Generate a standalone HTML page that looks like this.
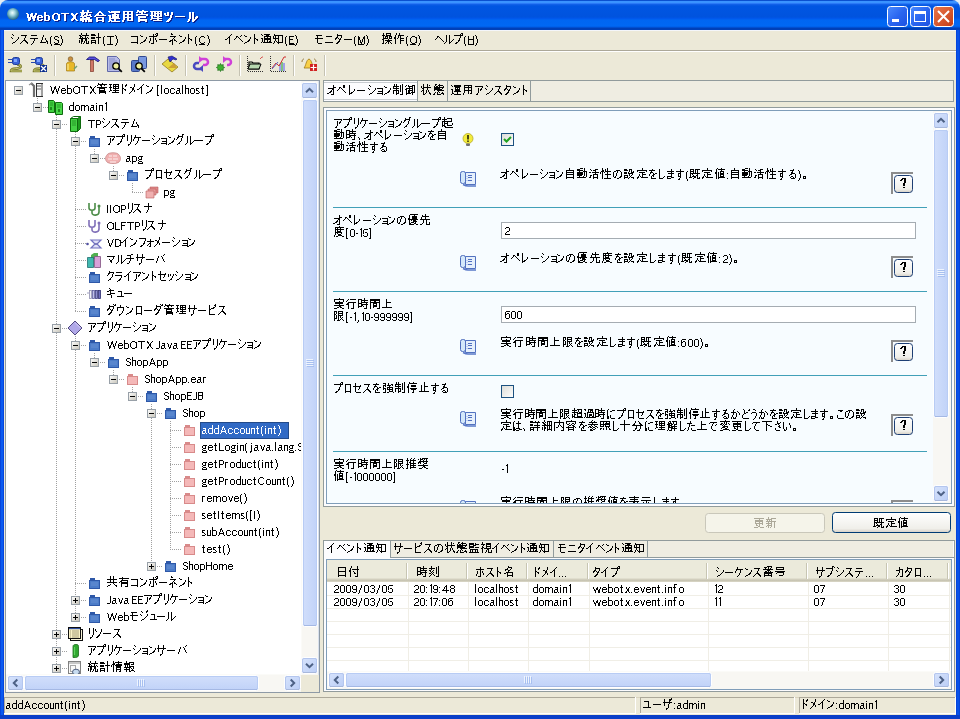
<!DOCTYPE html>
<html><head><meta charset="utf-8"><style>
html,body{margin:0;padding:0;width:960px;height:719px;overflow:hidden;background:#0A3FD6}
svg{display:block}
</style></head><body>
<svg width="960" height="719" viewBox="0 0 960 719">
<defs>
<linearGradient id="gTitle" x1="0" y1="0" x2="0" y2="30" gradientUnits="userSpaceOnUse"><stop offset="0.0000" stop-color="#0A50D0"/><stop offset="0.0267" stop-color="#0A50D0"/><stop offset="0.0400" stop-color="#3A93FF"/><stop offset="0.0933" stop-color="#3A93FF"/><stop offset="0.1167" stop-color="#2A7AF8"/><stop offset="0.1500" stop-color="#1060E8"/><stop offset="0.2000" stop-color="#0056E2"/><stop offset="0.5667" stop-color="#0053DE"/><stop offset="0.6167" stop-color="#0058EC"/><stop offset="0.6667" stop-color="#0066F2"/><stop offset="0.8667" stop-color="#0068F4"/><stop offset="0.9067" stop-color="#0058E0"/><stop offset="0.9333" stop-color="#0040B8"/><stop offset="0.9867" stop-color="#0040B8"/><stop offset="1.0000" stop-color="#0040B8"/></linearGradient>
<radialGradient id="gGlobe" cx="0.45" cy="0.4" r="0.6"><stop offset="0" stop-color="#F0FFFF"/><stop offset="0.35" stop-color="#A8D8E0"/><stop offset="0.75" stop-color="#4890A8"/><stop offset="1" stop-color="#2A6080"/></radialGradient>
<linearGradient id="gTBtn" x1="0" y1="0" x2="1" y2="1"><stop offset="0" stop-color="#4C8CFF"/><stop offset="0.5" stop-color="#2A66F0"/><stop offset="1" stop-color="#1C50E0"/></linearGradient>
<linearGradient id="gClose" x1="0" y1="0" x2="1" y2="1"><stop offset="0" stop-color="#E8784C"/><stop offset="0.5" stop-color="#D85A30"/><stop offset="1" stop-color="#C03C18"/></linearGradient>
<clipPath id="clipContent"><rect x="327" y="111" width="606" height="392"/></clipPath>
<linearGradient id="gBtnV" x1="0" y1="0" x2="1" y2="1"><stop offset="0" stop-color="#D8E4FC"/><stop offset="1" stop-color="#BACDF6"/></linearGradient>
<linearGradient id="gThumbV" x1="0" y1="0" x2="1" y2="0"><stop offset="0" stop-color="#D2DFFB"/><stop offset="1" stop-color="#C0D2F8"/></linearGradient>
<linearGradient id="gThumbH" x1="0" y1="0" x2="0" y2="1"><stop offset="0" stop-color="#D2DFFB"/><stop offset="1" stop-color="#C0D2F8"/></linearGradient>
<linearGradient id="gBtn" x1="0" y1="0" x2="0" y2="1"><stop offset="0" stop-color="#FFFFFF"/><stop offset="0.8" stop-color="#F0EFEA"/><stop offset="1" stop-color="#D6D0C5"/></linearGradient>
<linearGradient id="gChk" x1="0" y1="0" x2="1" y2="1"><stop offset="0" stop-color="#DCDCD7"/><stop offset="1" stop-color="#FFFFFF"/></linearGradient>
<linearGradient id="gHdr" x1="0" y1="0" x2="0" y2="1"><stop offset="0" stop-color="#EBEADB"/><stop offset="0.82" stop-color="#EBEADB"/><stop offset="0.86" stop-color="#D6D3C2"/><stop offset="0.95" stop-color="#C5C2B0"/><stop offset="1" stop-color="#E2DFD0"/></linearGradient>
<clipPath id="clipTree"><rect x="6" y="81" width="295" height="594"/></clipPath>
<linearGradient id="gExp" x1="0" y1="0" x2="1" y2="1"><stop offset="0" stop-color="#FFFFFF"/><stop offset="1" stop-color="#C6C3B8"/></linearGradient>

<symbol id="i_folder" viewBox="0 0 16 16" width="16" height="16" overflow="visible">
<path d="M3 5h11v9H3z" fill="#2E58A8"/><path d="M4 3h5v2H4z" fill="#2E58A8"/><path d="M4 6h9v7H4z" fill="#4C7CC8"/><path d="M5 8h7M5 10h7" stroke="#7AA0DC" stroke-width="0.6"/>
</symbol>
<symbol id="i_pfolder" viewBox="0 0 16 16" width="16" height="16" overflow="visible">
<path d="M3 5h11v9H3z" fill="#D88A8A"/><path d="M4 3h5v2H4z" fill="#D88A8A"/><path d="M4 6h9v7H4z" fill="#F4B8B8"/>
</symbol>
<symbol id="i_root" viewBox="0 0 16 16" width="16" height="16" overflow="visible">
<path d="M2 1l3 3v11" stroke="#707070" stroke-width="2.2" fill="none"/><path d="M0 3l3-2" stroke="#909090" stroke-width="1.2"/>
<rect x="7.5" y="1.5" width="6" height="13" fill="#F4F4F4" stroke="#303030"/><path d="M8 4h5M8 7h5" stroke="#606060"/><rect x="12" y="2" width="2" height="12" fill="#A0A0A0"/>
</symbol>
<symbol id="i_domain" viewBox="0 0 16 16" width="16" height="16" overflow="visible">
<path d="M0.5 1.5h5l1 1v11h-6z" fill="#40D040" stroke="#0E6A0E"/><path d="M7.5 3.5h6l1 1v11h-7z" fill="#48D848" stroke="#0E6A0E"/>
<path d="M2 4h3M2 6h3M9 6h4M9 8h4" stroke="#1E8A1E" stroke-width="0.8"/><rect x="2" y="8" width="2" height="3" fill="#1E8A1E"/><rect x="10" y="10" width="2" height="3" fill="#1E8A1E"/>
</symbol>
<symbol id="i_tp" viewBox="0 0 16 16" width="16" height="16" overflow="visible">
<path d="M3.5 2.5h7v13h-7z" fill="#44D044" stroke="#0E6A0E"/><path d="M10.5 2.5l3-2v12l-3 3z" fill="#1E9A1E" stroke="#0E6A0E"/><path d="M3.5 2.5l3-2h7" fill="none" stroke="#0E6A0E"/>
<path d="M5 5h4M5 7h4M5 9h4" stroke="#1E8A1E" stroke-width="0.8"/>
</symbol>
<symbol id="i_apg" viewBox="0 0 16 16" width="16" height="16" overflow="visible">
<path d="M2 5c1-3 11-3 12 0c2 2 2 5 0 7c-2 2-10 2-12 0c-2-2-2-5 0-7z" fill="#F0B0B0" stroke="#C88888" stroke-width="0.8"/>
<path d="M4 6h3M8 6h4M3 9h4M8 9h5M5 12h6" stroke="#FFFFFF" stroke-width="0.8"/>
</symbol>
<symbol id="i_pg" viewBox="0 0 16 16" width="16" height="16" overflow="visible">
<path d="M7 3h8v6H7z" fill="#E08888" stroke="#B86060" stroke-width="0.6"/><path d="M5 5h8v6H5z" fill="#E89A9A" stroke="#B86060" stroke-width="0.6"/><path d="M3 7h8v7H3z" fill="#F0B0B0" stroke="#B86060" stroke-width="0.6"/>
</symbol>
<symbol id="i_iiop" viewBox="0 0 16 16" width="16" height="16" overflow="visible">
<path d="M3 2v5c0 3 6 3 6 0V2M6 10v2c0 3 7 3 7-1V6" stroke="#4C8C48" stroke-width="1.6" fill="none"/><circle cx="13" cy="5" r="1.5" fill="#4C8C48"/>
</symbol>
<symbol id="i_olftp" viewBox="0 0 16 16" width="16" height="16" overflow="visible">
<path d="M3 2v5c0 3 6 3 6 0V2M6 10v2c0 3 7 3 7-1V6" stroke="#8070B8" stroke-width="1.6" fill="none"/><circle cx="13" cy="5" r="1.5" fill="#8070B8"/>
</symbol>
<symbol id="i_vd" viewBox="0 0 16 16" width="16" height="16" overflow="visible">
<path d="M5 5h10l-4 4 4 4H5l4-4z" fill="#E0E0F8" stroke="#7070C0" stroke-width="1.2"/><circle cx="1.5" cy="9" r="1.3" fill="#5050A0"/><path d="M9 9h2" stroke="#404090"/>
</symbol>
<symbol id="i_multi" viewBox="0 0 16 16" width="16" height="16" overflow="visible">
<path d="M5 3l3-2h4v6H5z" fill="#50B050"/><path d="M1.5 5.5h6v10h-6z" fill="#40B8B0" stroke="#207070" stroke-width="0.8"/><path d="M8.5 4.5h6v11h-6z" fill="#D8A0D8" stroke="#805080" stroke-width="0.8"/>
</symbol>
<symbol id="i_queue" viewBox="0 0 16 16" width="16" height="16" overflow="visible">
<path d="M1 7h2" stroke="#A0A0C0"/><rect x="3.5" y="4.5" width="2" height="8" fill="#F0F0F8" stroke="#9090B0" stroke-width="0.8"/>
<rect x="6.5" y="4.5" width="2" height="8" fill="#C0C0E8" stroke="#6060A0" stroke-width="0.8"/><rect x="9.5" y="4.5" width="2" height="8" fill="#9090D0" stroke="#404080" stroke-width="0.8"/><rect x="12.5" y="4.5" width="2" height="8" fill="#7070C0" stroke="#303070" stroke-width="0.8"/>
</symbol>
<symbol id="i_diamond" viewBox="0 0 16 16" width="16" height="16" overflow="visible">
<path d="M8 1l7 7-7 7-7-7z" fill="#B0A8E8" stroke="#504880" stroke-width="1"/><path d="M8 2.5l5.5 5.5" stroke="#D8D0F8" stroke-width="1"/>
</symbol>
<symbol id="i_notepad" viewBox="0 0 16 16" width="16" height="16" overflow="visible">
<rect x="3.5" y="3.5" width="12" height="11" fill="#F8F4D8" stroke="#101010" stroke-width="1"/>
<rect x="1.5" y="1.5" width="12" height="11" fill="#FBF3C8" stroke="#101010" stroke-width="1"/>
<rect x="2" y="2" width="11" height="1.2" fill="#3050A0"/>
<path d="M3 5h1M5 5h7M3 7h1M5 7h7M3 9h1M5 9h7M3 11h1M5 11h7" stroke="#9A9470" stroke-width="0.9"/>
</symbol>
<symbol id="i_appsrv" viewBox="0 0 16 16" width="16" height="16" overflow="visible">
<path d="M6 3.5c0-1.5 1-2 3-2c2 0 2.5.5 2.5 2v8.5c0 1.5-1 2.5-3 2.5h-2.5z" fill="#30A830" stroke="#1A6A1A" stroke-width="0.8"/><path d="M7.5 4v8" stroke="#60D060" stroke-width="1.2"/>
</symbol>
<symbol id="i_stats" viewBox="0 0 16 16" width="16" height="16" overflow="visible">
<rect x="1.5" y="1.5" width="12" height="12" fill="#FAFAFA" stroke="#808080"/><rect x="2" y="2" width="11" height="2" fill="#C8C8C8"/><rect x="3.5" y="5.5" width="5" height="6" fill="none" stroke="#A8A8A8"/>
<ellipse cx="9" cy="12" rx="3.5" ry="2.8" fill="#C8DCF0" stroke="#506080" stroke-width="1"/><path d="M11.5 14l2 2" stroke="#202020" stroke-width="1.4"/>
</symbol>

<symbol id="i_book" viewBox="0 0 17 16" width="17" height="16" overflow="visible">
<rect x="0.5" y="0.5" width="5" height="12" rx="2" fill="#D4E8FA" stroke="#4C6CBC" stroke-width="1"/>
<path d="M5.5 1.5h10v12h-10z" fill="#E6F0FC" stroke="#5272C0" stroke-width="1"/>
<path d="M3 13.5c2 1 3 1.5 5 1.5h8" fill="none" stroke="#5878C8" stroke-width="1.5"/>
<path d="M8 4.5h4M8 6.5h4M8 9.5h4" stroke="#5070C0" stroke-width="1"/><path d="M7 5v6" stroke="#90A8E0" stroke-width="0.8" stroke-dasharray="1 1"/>
</symbol>
<symbol id="i_bulb" viewBox="0 0 14 16" width="14" height="16" overflow="visible">
<circle cx="8" cy="6.5" r="5" fill="#F2EC3C" stroke="#B8A828" stroke-width="0.8"/><rect x="6" y="11.5" width="4" height="2.5" rx="1" fill="#707070"/><rect x="7.3" y="3" width="1.4" height="4.5" fill="#000"/><rect x="7.3" y="8.5" width="1.4" height="1.4" fill="#000"/>
</symbol>

<symbol id="t_plug" viewBox="0 0 16 16" width="16" height="16" overflow="visible">
<path d="M9 8.5c5 0 5 3.5 0 4c-4 0.5-6 0.5-6 2.5h11" fill="none" stroke="#7C7C30" stroke-width="2.6"/>
<path d="M9 8.5c5 0 5 3.5 0 4c-4 0.5-6 0.5-6 2.5h11" fill="none" stroke="#C8C870" stroke-width="1"/>
<rect x="4.5" y="1.5" width="7" height="7" rx="2" fill="#3A62D8" stroke="#1C3A98" stroke-width="1"/><rect x="6" y="3" width="3" height="3" fill="#7CA4FF"/>
<path d="M0 3.5h4.5M0 6.5h4.5" stroke="#2848B0" stroke-width="1.2"/>
</symbol>
<symbol id="t_plugx" viewBox="0 0 16 16" width="16" height="16" overflow="visible">
<path d="M9 8.5c5 0 5 3.5 0 4c-4 0.5-6 0.5-6 2.5h7" fill="none" stroke="#7C7C30" stroke-width="2.6"/>
<path d="M9 8.5c5 0 5 3.5 0 4c-4 0.5-6 0.5-6 2.5h7" fill="none" stroke="#C8C870" stroke-width="1"/>
<rect x="4.5" y="1.5" width="7" height="7" rx="2" fill="#3A62D8" stroke="#1C3A98" stroke-width="1"/><rect x="6" y="3" width="3" height="3" fill="#7CA4FF"/>
<path d="M0 3.5h4.5M0 6.5h4.5" stroke="#2848B0" stroke-width="1.2"/>
<rect x="9" y="9" width="7" height="7" fill="#0A2C8C"/><path d="M10 10l5 5M15 10l-5 5" stroke="#fff" stroke-width="1.2"/>
</symbol>
<symbol id="t_person" viewBox="0 0 16 16" width="16" height="16" overflow="visible">
<circle cx="6.5" cy="3" r="2.3" fill="#C89040" stroke="#705020" stroke-width="0.6"/><path d="M2.5 8c0-3 8-3 8 0v7h-8z" fill="#E8B828" stroke="#A07818" stroke-width="0.7"/><path d="M4 8v6" stroke="#F8E890" stroke-width="1.2"/><path d="M10 13l3-3" stroke="#70A070" stroke-width="1.5"/>
</symbol>
<symbol id="t_hammer" viewBox="0 0 16 16" width="16" height="16" overflow="visible">
<path d="M0.5 3.5l3-2.5h5l5 3.5l-1.5 1.2l-3.5-2.2h-5z" fill="#5A50E0" stroke="#1A1880" stroke-width="0.9"/><rect x="4.5" y="4.5" width="3" height="11" fill="#D07868" stroke="#8A4838" stroke-width="0.8"/>
</symbol>
<symbol id="t_docmag" viewBox="0 0 16 16" width="16" height="16" overflow="visible">
<path d="M0.5 0.5h9l3 3v12h-12z" fill="#B8BCE8" stroke="#6068A8"/><path d="M2 3h6M2 5h8M2 7h8M2 9h4M2 11h4M2 13h4" stroke="#7078B8" stroke-width="0.7"/>
<circle cx="9" cy="10" r="3.2" fill="#F0F0A0" stroke="#000" stroke-width="1.3"/><path d="M11.3 12.3l3.5 3.5" stroke="#000" stroke-width="1.8"/>
</symbol>
<symbol id="t_docsmag" viewBox="0 0 16 16" width="16" height="16" overflow="visible">
<rect x="0.5" y="4.5" width="8" height="11" rx="1" fill="#5878C8" stroke="#304890"/><rect x="7.5" y="0.5" width="8" height="12" rx="1" fill="#7898E0" stroke="#304890"/>
<circle cx="8" cy="10" r="3.2" fill="#F0F0A0" stroke="#000" stroke-width="1.3"/><path d="M10.3 12.3l3.5 3.5" stroke="#000" stroke-width="1.8"/>
</symbol>
<symbol id="t_envham" viewBox="0 0 16 16" width="16" height="16" overflow="visible">
<path d="M0 8l6-5l10 8l-6 5z" fill="#E8D840" stroke="#907820" stroke-width="0.8"/><path d="M6 12l6-5 3 5" fill="#C08830" opacity="0.7"/>
<path d="M6 1l4-1l5 3l-1 1l-3-1l-3 3z" fill="#3030D0" stroke="#101060" stroke-width="0.6"/>
</symbol>
<symbol id="t_arrows" viewBox="0 0 16 16" width="16" height="16" overflow="visible">
<path d="M8 3h4a3 3 0 0 1 0 6h-2" fill="none" stroke="#D040D8" stroke-width="2.5"/><path d="M6 0v7l4-3.5z" fill="#D040D8"/>
<path d="M8 13H4a3 3 0 0 1 0-6h2" fill="none" stroke="#4848C0" stroke-width="2.5"/><path d="M10 16V9l-4 3.5z" fill="#4848C0"/>
</symbol>
<symbol id="t_gear" viewBox="0 0 16 16" width="16" height="16" overflow="visible">
<path d="M9 3h3a3 3 0 0 1 0 6h-1" fill="none" stroke="#D040D8" stroke-width="2.5"/><path d="M7 0v7l4-3.5z" fill="#D040D8"/>
<path d="M4.5 7.5l1 1.6 1.8-.5-.2 1.9 1.6 1-1.6 1 .2 1.9-1.8-.5-1 1.6-1-1.6-1.8.5.2-1.9-1.6-1 1.6-1-.2-1.9 1.8.5z" fill="#40B030" stroke="#186018" stroke-width="0.6"/>
</symbol>
<symbol id="t_fprint" viewBox="0 0 16 16" width="16" height="16" overflow="visible">
<path d="M0.5 0v15.5H16" fill="none" stroke="#303030" stroke-dasharray="1 1"/>
<path d="M2 13V6h3l1 1h6v6z" fill="#D8E8C8" stroke="#000" stroke-width="1.2"/><path d="M1 13l2-5h11l-2 5z" fill="#B8D8B0" stroke="#000" stroke-width="1"/>
<path d="M13 3l2-2h1" stroke="#D03030" stroke-width="0.8" fill="none"/>
</symbol>
<symbol id="t_chart" viewBox="0 0 16 16" width="16" height="16" overflow="visible">
<path d="M0.5 0v15.5H16" fill="none" stroke="#303030" stroke-dasharray="1 1"/>
<rect x="9" y="8" width="2" height="7" fill="#A0A0E8"/><rect x="11" y="6" width="2" height="9" fill="#80C080"/><rect x="13" y="7" width="2" height="8" fill="#A0A0E8"/>
<path d="M2 12l4-5 3 3 5-9h2" fill="none" stroke="#D03030" stroke-width="1"/><path d="M2 13l6-7" stroke="#6060C0" stroke-width="1"/>
</symbol>
<symbol id="t_bell" viewBox="0 0 16 16" width="16" height="16" overflow="visible">
<path d="M3 12c2-2 2-8 5-9c3 1 3 7 5 9z" fill="#F8D048" stroke="#A07818" stroke-width="0.8"/><path d="M1 6c0-2 1-3 2-3M15 6c0-2-1-3-2-3" stroke="#806020" fill="none" stroke-width="0.8"/>
<rect x="9" y="8" width="7" height="7" fill="#D02020"/><path d="M12.5 8.5v6M9.5 11.5h6" stroke="#fff" stroke-width="1.2"/>
</symbol>
<g shape-rendering="crispEdges"><path id="g0" d="M1 -8h1v1h-1zM6 -8h1v1h-1zM10 -8h1v1h-1zM2 -7h1v1h-1zM5 -7h2v1h-2zM10 -7h1v1h-1zM2 -6h1v1h-1zM5 -6h2v1h-2zM9 -6h1v1h-1zM2 -5h1v1h-1zM5 -5h1v1h-1zM7 -5h1v1h-1zM9 -5h1v1h-1zM2 -4h1v1h-1zM4 -4h1v1h-1zM7 -4h1v1h-1zM9 -4h1v1h-1zM3 -3h2v1h-2zM7 -3h2v1h-2zM3 -2h2v1h-2zM8 -2h1v1h-1zM3 -1h1v1h-1zM8 -1h1v1h-1z"/><path id="g1" d="M2 -6h3v1h-3zM1 -5h1v1h-1zM5 -5h1v1h-1zM1 -4h5v1h-5zM1 -3h1v1h-1zM1 -2h1v1h-1zM5 -2h1v1h-1zM2 -1h3v1h-3z"/><path id="g2" d="M1 -9h1v1h-1zM1 -8h1v1h-1zM1 -7h1v1h-1zM1 -6h4v1h-4zM1 -5h1v1h-1zM5 -5h1v1h-1zM1 -4h1v1h-1zM5 -4h1v1h-1zM1 -3h1v1h-1zM5 -3h1v1h-1zM1 -2h1v1h-1zM5 -2h1v1h-1zM1 -1h4v1h-4z"/><path id="g3" d="M3 -8h3v1h-3zM2 -7h1v1h-1zM6 -7h2v1h-2zM1 -6h1v1h-1zM7 -6h1v1h-1zM1 -5h1v1h-1zM7 -5h1v1h-1zM1 -4h1v1h-1zM7 -4h1v1h-1zM1 -3h1v1h-1zM7 -3h1v1h-1zM2 -2h1v1h-1zM6 -2h2v1h-2zM3 -1h3v1h-3z"/><path id="g4" d="M1 -8h7v1h-7zM4 -7h1v1h-1zM4 -6h1v1h-1zM4 -5h1v1h-1zM4 -4h1v1h-1zM4 -3h1v1h-1zM4 -2h1v1h-1zM4 -1h1v1h-1z"/><path id="g5" d="M2 -8h1v1h-1zM7 -8h1v1h-1zM2 -7h2v1h-2zM6 -7h1v1h-1zM3 -6h1v1h-1zM5 -6h1v1h-1zM4 -5h2v1h-2zM4 -4h2v1h-2zM3 -3h1v1h-1zM5 -3h1v1h-1zM2 -2h2v1h-2zM6 -2h1v1h-1zM2 -1h1v1h-1zM7 -1h1v1h-1z"/><path id="g6" d="M3 -12h1v1h-1zM8 -12h1v1h-1zM3 -11h1v1h-1zM8 -11h1v1h-1zM1 -10h2v1h-2zM4 -10h1v1h-1zM6 -10h6v1h-6zM2 -9h1v1h-1zM4 -9h1v1h-1zM7 -9h1v1h-1zM2 -8h2v1h-2zM7 -8h1v1h-1zM10 -8h1v1h-1zM2 -7h1v1h-1zM5 -7h1v1h-1zM7 -7h4v1h-4zM1 -6h6v1h-6zM11 -6h1v1h-1zM3 -5h1v1h-1zM7 -5h1v1h-1zM9 -5h1v1h-1zM1 -4h1v1h-1zM3 -4h1v1h-1zM5 -4h1v1h-1zM7 -4h1v1h-1zM9 -4h1v1h-1zM1 -3h1v1h-1zM3 -3h1v1h-1zM5 -3h1v1h-1zM7 -3h1v1h-1zM9 -3h1v1h-1zM11 -3h1v1h-1zM1 -2h1v1h-1zM3 -2h1v1h-1zM6 -2h1v1h-1zM9 -2h1v1h-1zM11 -2h1v1h-1zM3 -1h1v1h-1zM6 -1h1v1h-1zM9 -1h3v1h-3z"/><path id="g7" d="M6 -11h1v1h-1zM5 -10h1v1h-1zM7 -10h1v1h-1zM4 -9h1v1h-1zM8 -9h1v1h-1zM3 -8h2v1h-2zM9 -8h1v1h-1zM2 -7h1v1h-1zM4 -7h5v1h-5zM10 -7h2v1h-2zM1 -6h1v1h-1zM3 -5h7v1h-7zM3 -4h1v1h-1zM9 -4h1v1h-1zM3 -3h1v1h-1zM9 -3h1v1h-1zM3 -2h7v1h-7zM3 -1h1v1h-1zM9 -1h1v1h-1z"/><path id="g8" d="M1 -11h1v1h-1zM4 -11h8v1h-8zM2 -10h1v1h-1zM4 -10h8v1h-8zM7 -9h1v1h-1zM5 -8h6v1h-6zM1 -7h2v1h-2zM5 -7h1v1h-1zM7 -7h1v1h-1zM10 -7h1v1h-1zM2 -6h1v1h-1zM5 -6h6v1h-6zM2 -5h1v1h-1zM5 -5h6v1h-6zM2 -4h1v1h-1zM4 -4h8v1h-8zM2 -3h1v1h-1zM7 -3h1v1h-1zM2 -2h2v1h-2zM7 -2h1v1h-1zM1 -1h1v1h-1zM4 -1h8v1h-8z"/><path id="g9" d="M2 -11h9v1h-9zM2 -10h1v1h-1zM6 -10h1v1h-1zM10 -10h1v1h-1zM2 -9h1v1h-1zM6 -9h1v1h-1zM10 -9h1v1h-1zM2 -8h9v1h-9zM2 -7h1v1h-1zM6 -7h1v1h-1zM10 -7h1v1h-1zM2 -6h1v1h-1zM6 -6h1v1h-1zM10 -6h1v1h-1zM2 -5h9v1h-9zM2 -4h1v1h-1zM6 -4h1v1h-1zM10 -4h1v1h-1zM2 -3h1v1h-1zM6 -3h1v1h-1zM10 -3h1v1h-1zM1 -2h1v1h-1zM6 -2h1v1h-1zM8 -2h3v1h-3zM1 -1h1v1h-1z"/><path id="g10" d="M2 -12h1v1h-1zM7 -12h1v1h-1zM2 -11h10v1h-10zM1 -10h1v1h-1zM4 -10h1v1h-1zM6 -10h1v1h-1zM9 -10h1v1h-1zM6 -9h1v1h-1zM1 -8h11v1h-11zM1 -7h1v1h-1zM11 -7h1v1h-1zM3 -6h7v1h-7zM3 -5h7v1h-7zM3 -4h1v1h-1zM3 -3h8v1h-8zM3 -2h8v1h-8zM3 -1h1v1h-1zM10 -1h1v1h-1z"/><path id="g11" d="M1 -11h11v1h-11zM2 -10h1v1h-1zM5 -10h1v1h-1zM8 -10h1v1h-1zM11 -10h1v1h-1zM2 -9h1v1h-1zM5 -9h7v1h-7zM2 -8h1v1h-1zM5 -8h1v1h-1zM8 -8h1v1h-1zM11 -8h1v1h-1zM1 -7h5v1h-5zM8 -7h1v1h-1zM11 -7h1v1h-1zM2 -6h1v1h-1zM5 -6h7v1h-7zM2 -5h1v1h-1zM8 -5h1v1h-1zM2 -4h10v1h-10zM1 -3h1v1h-1zM8 -3h1v1h-1zM4 -2h8v1h-8z"/><path id="g12" d="M4 -10h1v1h-1zM8 -10h1v1h-1zM1 -9h1v1h-1zM4 -9h1v1h-1zM8 -9h1v1h-1zM1 -8h1v1h-1zM4 -8h1v1h-1zM8 -8h1v1h-1zM2 -7h1v1h-1zM4 -7h1v1h-1zM7 -7h1v1h-1zM7 -6h1v1h-1zM7 -5h1v1h-1zM6 -4h1v1h-1zM5 -3h2v1h-2zM4 -2h2v1h-2zM3 -1h2v1h-2z"/><path id="g13" d="M1 -6h9v1h-9z"/><path id="g14" d="M3 -10h1v1h-1zM6 -10h1v1h-1zM3 -9h1v1h-1zM6 -9h1v1h-1zM3 -8h1v1h-1zM6 -8h1v1h-1zM3 -7h1v1h-1zM6 -7h1v1h-1zM3 -6h1v1h-1zM6 -6h1v1h-1zM10 -6h1v1h-1zM3 -5h1v1h-1zM6 -5h1v1h-1zM9 -5h2v1h-2zM3 -4h1v1h-1zM6 -4h1v1h-1zM9 -4h1v1h-1zM2 -3h1v1h-1zM6 -3h1v1h-1zM8 -3h1v1h-1zM2 -2h1v1h-1zM6 -2h2v1h-2zM1 -1h1v1h-1zM6 -1h1v1h-1z"/><path id="g15" d="M2 -10h1v1h-1zM3 -9h1v1h-1zM1 -7h1v1h-1zM8 -7h1v1h-1zM2 -6h1v1h-1zM8 -6h1v1h-1zM7 -5h1v1h-1zM6 -4h1v1h-1zM5 -3h1v1h-1zM3 -2h2v1h-2zM2 -1h1v1h-1z"/><path id="g16" d="M2 -9h6v1h-6zM6 -8h1v1h-1zM6 -7h1v1h-1zM5 -6h1v1h-1zM5 -5h1v1h-1zM4 -4h3v1h-3zM3 -3h1v1h-1zM6 -3h2v1h-2zM2 -2h1v1h-1zM7 -2h2v1h-2zM1 -1h1v1h-1zM8 -1h1v1h-1z"/><path id="g17" d="M2 -9h6v1h-6zM1 -6h8v1h-8zM5 -5h1v1h-1zM5 -4h1v1h-1zM4 -3h1v1h-1zM4 -2h1v1h-1zM3 -1h1v1h-1zM2 0h1v1h-1z"/><path id="g18" d="M4 -9h1v1h-1zM4 -8h1v1h-1zM3 -7h1v1h-1zM3 -6h1v1h-1zM6 -6h1v1h-1zM3 -5h1v1h-1zM6 -5h1v1h-1zM2 -4h1v1h-1zM7 -4h1v1h-1zM2 -3h1v1h-1zM7 -3h2v1h-2zM1 -2h6v1h-6zM8 -2h1v1h-1zM8 -1h1v1h-1z"/><path id="g19" d="M2 -8h1v1h-1zM1 -7h1v1h-1zM1 -6h1v1h-1zM1 -5h1v1h-1zM1 -4h1v1h-1zM1 -3h1v1h-1zM1 -2h1v1h-1zM1 -1h1v1h-1zM2 0h1v1h-1zM2 1h1v1h-1z"/><path id="g20" d="M2 -8h3v1h-3zM1 -7h1v1h-1zM5 -7h1v1h-1zM1 -6h1v1h-1zM2 -5h2v1h-2zM4 -4h2v1h-2zM5 -3h1v1h-1zM1 -2h1v1h-1zM5 -2h1v1h-1zM2 -1h3v1h-3z"/><path id="g21" d="M1 -9h1v1h-1zM2 -8h1v1h-1zM2 -7h1v1h-1zM2 -6h1v1h-1zM3 -5h1v1h-1zM3 -4h1v1h-1zM3 -3h1v1h-1zM3 -2h1v1h-1zM2 -1h1v1h-1zM2 0h1v1h-1zM1 1h1v1h-1z"/><path id="g22" d="M3 -11h1v1h-1zM8 -11h1v1h-1zM3 -10h1v1h-1zM8 -10h1v1h-1zM1 -9h2v1h-2zM4 -9h7v1h-7zM2 -8h2v1h-2zM7 -8h1v1h-1zM2 -7h1v1h-1zM4 -7h1v1h-1zM7 -7h1v1h-1zM9 -7h1v1h-1zM1 -6h8v1h-8zM10 -6h1v1h-1zM3 -5h2v1h-2zM7 -5h2v1h-2zM1 -4h1v1h-1zM3 -4h2v1h-2zM7 -4h2v1h-2zM1 -3h1v1h-1zM3 -3h2v1h-2zM6 -3h1v1h-1zM8 -3h1v1h-1zM10 -3h1v1h-1zM1 -2h1v1h-1zM3 -2h1v1h-1zM6 -2h1v1h-1zM8 -2h1v1h-1zM10 -2h1v1h-1zM3 -1h1v1h-1zM5 -1h1v1h-1zM8 -1h3v1h-3z"/><path id="g23" d="M8 -11h1v1h-1zM1 -10h4v1h-4zM8 -10h1v1h-1zM1 -9h5v1h-5zM8 -9h1v1h-1zM8 -8h1v1h-1zM1 -7h4v1h-4zM6 -7h5v1h-5zM1 -6h4v1h-4zM8 -6h1v1h-1zM8 -5h1v1h-1zM1 -4h5v1h-5zM8 -4h1v1h-1zM1 -3h1v1h-1zM5 -3h1v1h-1zM8 -3h1v1h-1zM1 -2h5v1h-5zM8 -2h1v1h-1zM1 -1h1v1h-1zM5 -1h1v1h-1zM8 -1h1v1h-1z"/><path id="g24" d="M1 -8h7v1h-7zM7 -7h1v1h-1zM7 -6h1v1h-1zM7 -5h1v1h-1zM7 -4h1v1h-1zM7 -3h1v1h-1zM1 -2h7v1h-7zM7 -1h1v1h-1z"/><path id="g25" d="M1 -9h1v1h-1zM2 -8h2v1h-2zM7 -7h1v1h-1zM7 -6h1v1h-1zM6 -5h1v1h-1zM5 -4h2v1h-2zM4 -3h2v1h-2zM2 -2h2v1h-2zM1 -1h1v1h-1z"/><path id="g26" d="M8 -11h2v1h-2zM5 -10h1v1h-1zM7 -10h1v1h-1zM9 -10h1v1h-1zM5 -9h1v1h-1zM8 -9h2v1h-2zM1 -8h8v1h-8zM5 -7h1v1h-1zM2 -6h1v1h-1zM5 -6h1v1h-1zM7 -6h1v1h-1zM2 -5h1v1h-1zM5 -5h1v1h-1zM7 -5h1v1h-1zM2 -4h1v1h-1zM5 -4h1v1h-1zM8 -4h1v1h-1zM1 -3h1v1h-1zM5 -3h1v1h-1zM8 -3h1v1h-1zM1 -2h1v1h-1zM5 -2h1v1h-1zM3 -1h3v1h-3z"/><path id="g27" d="M1 -5h8v1h-8z"/><path id="g28" d="M3 -11h1v1h-1zM3 -10h2v1h-2zM2 -8h6v1h-6zM6 -7h1v1h-1zM5 -6h1v1h-1zM4 -5h1v1h-1zM6 -5h1v1h-1zM2 -4h3v1h-3zM6 -4h2v1h-2zM1 -3h2v1h-2zM4 -3h1v1h-1zM8 -3h1v1h-1zM4 -2h1v1h-1zM4 -1h1v1h-1zM4 0h1v1h-1z"/><path id="g29" d="M2 -10h1v1h-1zM2 -9h1v1h-1zM2 -8h1v1h-1zM2 -7h1v1h-1zM2 -6h2v1h-2zM2 -5h1v1h-1zM4 -5h2v1h-2zM2 -4h1v1h-1zM5 -4h1v1h-1zM2 -3h1v1h-1zM2 -2h1v1h-1zM2 -1h1v1h-1z"/><path id="g30" d="M3 -8h3v1h-3zM2 -7h1v1h-1zM6 -7h1v1h-1zM1 -6h1v1h-1zM1 -5h1v1h-1zM1 -4h1v1h-1zM1 -3h1v1h-1zM2 -2h1v1h-1zM6 -2h1v1h-1zM3 -1h3v1h-3z"/><path id="g31" d="M6 -10h1v1h-1zM5 -9h1v1h-1zM4 -8h1v1h-1zM3 -7h2v1h-2zM2 -6h1v1h-1zM4 -6h1v1h-1zM0 -5h2v1h-2zM4 -5h1v1h-1zM4 -4h1v1h-1zM4 -3h1v1h-1zM4 -2h1v1h-1zM4 -1h1v1h-1z"/><path id="g32" d="M8 -9h1v1h-1zM3 -8h2v1h-2zM7 -8h1v1h-1zM3 -7h1v1h-1zM5 -7h1v1h-1zM2 -6h1v1h-1zM6 -6h1v1h-1zM1 -5h1v1h-1zM7 -5h1v1h-1zM8 -4h1v1h-1zM9 -3h1v1h-1z"/><path id="g33" d="M1 -10h1v1h-1zM4 -10h6v1h-6zM2 -9h1v1h-1zM6 -9h3v1h-3zM4 -8h7v1h-7zM4 -7h1v1h-1zM7 -7h1v1h-1zM10 -7h1v1h-1zM1 -6h2v1h-2zM4 -6h7v1h-7zM2 -5h1v1h-1zM4 -5h7v1h-7zM2 -4h1v1h-1zM4 -4h1v1h-1zM7 -4h1v1h-1zM10 -4h1v1h-1zM2 -3h1v1h-1zM4 -3h1v1h-1zM7 -3h1v1h-1zM9 -3h2v1h-2zM1 -2h1v1h-1zM3 -2h9v1h-9z"/><path id="g34" d="M2 -10h1v1h-1zM2 -9h9v1h-9zM1 -8h1v1h-1zM3 -8h1v1h-1zM6 -8h1v1h-1zM10 -8h1v1h-1zM1 -7h1v1h-1zM3 -7h1v1h-1zM6 -7h1v1h-1zM10 -7h1v1h-1zM1 -6h6v1h-6zM10 -6h1v1h-1zM3 -5h1v1h-1zM6 -5h1v1h-1zM10 -5h1v1h-1zM3 -4h1v1h-1zM6 -4h1v1h-1zM10 -4h1v1h-1zM2 -3h1v1h-1zM4 -3h1v1h-1zM6 -3h1v1h-1zM10 -3h1v1h-1zM2 -2h1v1h-1zM5 -2h6v1h-6zM1 -1h1v1h-1zM6 -1h1v1h-1z"/><path id="g35" d="M1 -8h5v1h-5zM1 -7h1v1h-1zM1 -6h1v1h-1zM1 -5h4v1h-4zM1 -4h1v1h-1zM1 -3h1v1h-1zM1 -2h1v1h-1zM1 -1h5v1h-5z"/><path id="g36" d="M2 -9h6v1h-6zM3 -8h1v1h-1zM3 -7h1v1h-1zM1 -6h8v1h-8zM3 -5h1v1h-1zM3 -4h1v1h-1zM3 -3h1v1h-1zM3 -2h1v1h-1zM4 -1h4v1h-4z"/><path id="g37" d="M2 -8h6v1h-6zM1 -2h8v1h-8z"/><path id="g38" d="M3 -10h1v1h-1zM3 -9h5v1h-5zM3 -8h1v1h-1zM7 -8h1v1h-1zM2 -7h2v1h-2zM7 -7h1v1h-1zM1 -6h2v1h-2zM4 -6h1v1h-1zM6 -6h1v1h-1zM1 -5h1v1h-1zM5 -5h2v1h-2zM5 -4h1v1h-1zM4 -3h2v1h-2zM3 -2h2v1h-2zM2 -1h2v1h-2z"/><path id="g39" d="M1 -8h1v1h-1zM7 -8h1v1h-1zM1 -7h2v1h-2zM6 -7h2v1h-2zM1 -6h2v1h-2zM6 -6h2v1h-2zM1 -5h2v1h-2zM5 -5h1v1h-1zM7 -5h1v1h-1zM1 -4h1v1h-1zM3 -4h1v1h-1zM5 -4h1v1h-1zM7 -4h1v1h-1zM1 -3h1v1h-1zM3 -3h1v1h-1zM5 -3h1v1h-1zM7 -3h1v1h-1zM1 -2h1v1h-1zM3 -2h2v1h-2zM7 -2h1v1h-1zM1 -1h1v1h-1zM4 -1h1v1h-1zM7 -1h1v1h-1z"/><path id="g40" d="M2 -11h1v1h-1zM5 -11h5v1h-5zM2 -10h1v1h-1zM5 -10h1v1h-1zM9 -10h1v1h-1zM1 -9h3v1h-3zM5 -9h5v1h-5zM2 -8h1v1h-1zM4 -8h3v1h-3zM8 -8h3v1h-3zM2 -7h1v1h-1zM4 -7h1v1h-1zM6 -7h1v1h-1zM8 -7h1v1h-1zM10 -7h1v1h-1zM2 -6h5v1h-5zM8 -6h3v1h-3zM1 -5h2v1h-2zM7 -5h1v1h-1zM2 -4h1v1h-1zM4 -4h7v1h-7zM2 -3h1v1h-1zM6 -3h3v1h-3zM2 -2h1v1h-1zM5 -2h1v1h-1zM7 -2h1v1h-1zM9 -2h1v1h-1zM1 -1h2v1h-2zM4 -1h1v1h-1zM7 -1h1v1h-1zM10 -1h1v1h-1z"/><path id="g41" d="M3 -11h1v1h-1zM6 -11h1v1h-1zM3 -10h1v1h-1zM6 -10h1v1h-1zM2 -9h1v1h-1zM5 -9h6v1h-6zM2 -8h1v1h-1zM5 -8h1v1h-1zM7 -8h1v1h-1zM1 -7h2v1h-2zM5 -7h1v1h-1zM7 -7h1v1h-1zM1 -6h2v1h-2zM4 -6h1v1h-1zM7 -6h4v1h-4zM2 -5h1v1h-1zM7 -5h1v1h-1zM2 -4h1v1h-1zM7 -4h4v1h-4zM2 -3h1v1h-1zM7 -3h1v1h-1zM2 -2h1v1h-1zM7 -2h1v1h-1zM2 -1h1v1h-1zM7 -1h1v1h-1z"/><path id="g42" d="M3 -8h2v1h-2zM3 -7h1v1h-1zM5 -7h1v1h-1zM2 -6h1v1h-1zM6 -6h1v1h-1zM1 -5h1v1h-1zM7 -5h1v1h-1zM8 -4h1v1h-1zM9 -3h1v1h-1z"/><path id="g43" d="M2 -9h1v1h-1zM5 -9h1v1h-1zM2 -8h1v1h-1zM5 -8h1v1h-1zM2 -7h1v1h-1zM5 -7h1v1h-1zM2 -6h1v1h-1zM5 -6h1v1h-1zM2 -5h1v1h-1zM5 -5h1v1h-1zM9 -5h1v1h-1zM2 -4h1v1h-1zM5 -4h1v1h-1zM8 -4h1v1h-1zM2 -3h1v1h-1zM5 -3h1v1h-1zM7 -3h1v1h-1zM1 -2h1v1h-1zM5 -2h2v1h-2zM0 -1h1v1h-1zM5 -1h1v1h-1z"/><path id="g44" d="M8 -11h2v1h-2zM7 -10h1v1h-1zM9 -10h1v1h-1zM1 -9h9v1h-9zM7 -8h1v1h-1zM7 -7h1v1h-1zM6 -6h1v1h-1zM6 -5h1v1h-1zM5 -4h2v1h-2zM5 -3h1v1h-1zM3 -2h2v1h-2zM2 -1h2v1h-2z"/><path id="g45" d="M1 -8h1v1h-1zM6 -8h1v1h-1zM1 -7h1v1h-1zM6 -7h1v1h-1zM1 -6h1v1h-1zM6 -6h1v1h-1zM1 -5h6v1h-6zM1 -4h1v1h-1zM6 -4h1v1h-1zM1 -3h1v1h-1zM6 -3h1v1h-1zM1 -2h1v1h-1zM6 -2h1v1h-1zM1 -1h1v1h-1zM6 -1h1v1h-1z"/><path id="g46" d="M2 -11h1v1h-1zM6 -11h1v1h-1zM2 -10h9v1h-9zM1 -9h1v1h-1zM4 -9h2v1h-2zM8 -9h1v1h-1zM5 -8h1v1h-1zM1 -7h10v1h-10zM3 -6h6v1h-6zM3 -5h1v1h-1zM8 -5h1v1h-1zM3 -4h6v1h-6zM3 -3h7v1h-7zM3 -2h7v1h-7zM3 -1h1v1h-1zM9 -1h1v1h-1z"/><path id="g47" d="M1 -10h3v1h-3zM5 -10h6v1h-6zM2 -9h1v1h-1zM5 -9h1v1h-1zM7 -9h1v1h-1zM10 -9h1v1h-1zM2 -8h1v1h-1zM5 -8h6v1h-6zM1 -7h3v1h-3zM5 -7h1v1h-1zM7 -7h1v1h-1zM10 -7h1v1h-1zM2 -6h1v1h-1zM5 -6h6v1h-6zM2 -5h1v1h-1zM7 -5h1v1h-1zM2 -4h2v1h-2zM5 -4h6v1h-6zM1 -3h1v1h-1zM7 -3h1v1h-1zM4 -2h7v1h-7z"/><path id="g48" d="M2 -10h1v1h-1zM6 -10h1v1h-1zM2 -9h1v1h-1zM5 -9h2v1h-2zM2 -8h1v1h-1zM5 -8h1v1h-1zM2 -7h1v1h-1zM2 -6h2v1h-2zM2 -5h1v1h-1zM4 -5h2v1h-2zM2 -4h1v1h-1zM5 -4h1v1h-1zM2 -3h1v1h-1zM2 -2h1v1h-1zM2 -1h1v1h-1z"/><path id="g49" d="M6 -10h1v1h-1zM6 -9h1v1h-1zM6 -8h1v1h-1zM2 -7h2v1h-2zM5 -7h1v1h-1zM4 -6h2v1h-2zM4 -5h2v1h-2zM4 -4h1v1h-1zM6 -4h1v1h-1zM3 -3h1v1h-1zM6 -3h1v1h-1zM2 -2h1v1h-1zM1 -1h1v1h-1z"/><path id="g51" d="M1 -9h2v1h-2zM1 -8h1v1h-1zM1 -7h1v1h-1zM1 -6h1v1h-1zM1 -5h1v1h-1zM1 -4h1v1h-1zM1 -3h1v1h-1zM1 -2h1v1h-1zM1 -1h1v1h-1zM1 0h1v1h-1zM1 1h2v1h-2z"/><path id="g52" d="M1 -9h1v1h-1zM1 -8h1v1h-1zM1 -7h1v1h-1zM1 -6h1v1h-1zM1 -5h1v1h-1zM1 -4h1v1h-1zM1 -3h1v1h-1zM1 -2h1v1h-1zM1 -1h1v1h-1z"/><path id="g53" d="M2 -6h3v1h-3zM1 -5h1v1h-1zM5 -5h1v1h-1zM1 -4h1v1h-1zM5 -4h1v1h-1zM1 -3h1v1h-1zM5 -3h1v1h-1zM1 -2h1v1h-1zM5 -2h1v1h-1zM2 -1h3v1h-3z"/><path id="g54" d="M2 -6h3v1h-3zM1 -5h1v1h-1zM5 -5h1v1h-1zM1 -4h1v1h-1zM1 -3h1v1h-1zM1 -2h1v1h-1zM5 -2h1v1h-1zM2 -1h3v1h-3z"/><path id="g55" d="M2 -6h3v1h-3zM4 -5h1v1h-1zM2 -4h3v1h-3zM1 -3h1v1h-1zM4 -3h1v1h-1zM1 -2h1v1h-1zM4 -2h1v1h-1zM1 -1h3v1h-3zM5 -1h1v1h-1z"/><path id="g56" d="M1 -9h1v1h-1zM1 -8h1v1h-1zM1 -7h1v1h-1zM1 -6h4v1h-4zM1 -5h1v1h-1zM4 -5h1v1h-1zM1 -4h1v1h-1zM4 -4h1v1h-1zM1 -3h1v1h-1zM4 -3h1v1h-1zM1 -2h1v1h-1zM4 -2h1v1h-1zM1 -1h1v1h-1zM4 -1h1v1h-1z"/><path id="g57" d="M1 -6h3v1h-3zM1 -5h1v1h-1zM1 -4h2v1h-2zM3 -3h1v1h-1zM4 -2h1v1h-1zM1 -1h3v1h-3z"/><path id="g58" d="M2 -8h1v1h-1zM2 -7h1v1h-1zM1 -6h3v1h-3zM2 -5h1v1h-1zM2 -4h1v1h-1zM2 -3h1v1h-1zM2 -2h1v1h-1zM2 -1h2v1h-2z"/><path id="g59" d="M1 -9h2v1h-2zM2 -8h1v1h-1zM2 -7h1v1h-1zM2 -6h1v1h-1zM2 -5h1v1h-1zM2 -4h1v1h-1zM2 -3h1v1h-1zM2 -2h1v1h-1zM2 -1h1v1h-1zM2 0h1v1h-1zM1 1h2v1h-2z"/><path id="g60" d="M5 -9h1v1h-1zM5 -8h1v1h-1zM5 -7h1v1h-1zM2 -6h4v1h-4zM1 -5h1v1h-1zM5 -5h1v1h-1zM1 -4h1v1h-1zM5 -4h1v1h-1zM1 -3h1v1h-1zM5 -3h1v1h-1zM1 -2h1v1h-1zM5 -2h1v1h-1zM2 -1h4v1h-4z"/><path id="g61" d="M1 -6h4v1h-4zM6 -6h2v1h-2zM1 -5h1v1h-1zM4 -5h2v1h-2zM8 -5h1v1h-1zM1 -4h1v1h-1zM4 -4h1v1h-1zM8 -4h1v1h-1zM1 -3h1v1h-1zM4 -3h1v1h-1zM8 -3h1v1h-1zM1 -2h1v1h-1zM4 -2h1v1h-1zM8 -2h1v1h-1zM1 -1h1v1h-1zM4 -1h1v1h-1zM8 -1h1v1h-1z"/><path id="g62" d="M1 -8h1v1h-1zM1 -6h1v1h-1zM1 -5h1v1h-1zM1 -4h1v1h-1zM1 -3h1v1h-1zM1 -2h1v1h-1zM1 -1h1v1h-1z"/><path id="g63" d="M1 -6h4v1h-4zM1 -5h1v1h-1zM4 -5h1v1h-1zM1 -4h1v1h-1zM4 -4h1v1h-1zM1 -3h1v1h-1zM4 -3h1v1h-1zM1 -2h1v1h-1zM4 -2h1v1h-1zM1 -1h1v1h-1zM4 -1h1v1h-1z"/><path id="g64" d="M3 -9h1v1h-1zM2 -8h2v1h-2zM3 -7h1v1h-1zM3 -6h1v1h-1zM3 -5h1v1h-1zM3 -4h1v1h-1zM3 -3h1v1h-1zM3 -2h1v1h-1zM3 -1h1v1h-1z"/><path id="g65" d="M1 -8h4v1h-4zM1 -7h1v1h-1zM5 -7h1v1h-1zM1 -6h1v1h-1zM5 -6h1v1h-1zM1 -5h1v1h-1zM5 -5h1v1h-1zM1 -4h4v1h-4zM1 -3h1v1h-1zM1 -2h1v1h-1zM1 -1h1v1h-1z"/><path id="g66" d="M1 -9h8v1h-8zM8 -8h1v1h-1zM4 -7h1v1h-1zM7 -7h1v1h-1zM4 -6h1v1h-1zM6 -6h2v1h-2zM4 -5h1v1h-1zM6 -5h1v1h-1zM4 -4h1v1h-1zM4 -3h1v1h-1zM3 -2h1v1h-1zM2 -1h2v1h-2z"/><path id="g67" d="M2 -10h1v1h-1zM6 -10h1v1h-1zM2 -9h1v1h-1zM6 -9h1v1h-1zM2 -8h1v1h-1zM6 -8h1v1h-1zM2 -7h1v1h-1zM6 -7h1v1h-1zM2 -6h1v1h-1zM6 -6h1v1h-1zM2 -5h1v1h-1zM6 -5h1v1h-1zM6 -4h1v1h-1zM5 -3h1v1h-1zM5 -2h1v1h-1zM3 -1h2v1h-2zM3 0h1v1h-1z"/><path id="g68" d="M3 -10h1v1h-1zM3 -9h1v1h-1zM2 -8h7v1h-7zM2 -7h1v1h-1zM6 -7h1v1h-1zM1 -6h1v1h-1zM6 -6h1v1h-1zM1 -5h1v1h-1zM6 -5h1v1h-1zM5 -4h1v1h-1zM5 -3h1v1h-1zM4 -2h1v1h-1zM3 -1h1v1h-1z"/><path id="g69" d="M1 -7h6v1h-6zM6 -6h1v1h-1zM6 -5h1v1h-1zM2 -4h5v1h-5zM6 -3h1v1h-1zM1 -2h6v1h-6zM6 -1h1v1h-1z"/><path id="g70" d="M7 -11h2v1h-2zM3 -10h1v1h-1zM7 -10h1v1h-1zM3 -9h5v1h-5zM2 -8h2v1h-2zM7 -8h1v1h-1zM2 -7h1v1h-1zM6 -7h1v1h-1zM1 -6h1v1h-1zM6 -6h1v1h-1zM6 -5h1v1h-1zM5 -4h1v1h-1zM4 -3h1v1h-1zM3 -2h2v1h-2zM2 -1h1v1h-1z"/><path id="g71" d="M1 -6h4v1h-4zM1 -5h1v1h-1zM5 -5h1v1h-1zM1 -4h1v1h-1zM5 -4h1v1h-1zM1 -3h1v1h-1zM5 -3h1v1h-1zM1 -2h1v1h-1zM5 -2h1v1h-1zM1 -1h4v1h-4zM1 0h1v1h-1zM1 1h1v1h-1z"/><path id="g72" d="M2 -6h4v1h-4zM1 -5h1v1h-1zM4 -5h1v1h-1zM1 -4h1v1h-1zM4 -4h1v1h-1zM2 -3h3v1h-3zM1 -2h1v1h-1zM2 -1h3v1h-3zM1 0h1v1h-1zM5 0h1v1h-1zM1 1h5v1h-5z"/><path id="g73" d="M2 -9h6v1h-6zM2 -8h1v1h-1zM7 -8h1v1h-1zM2 -7h1v1h-1zM7 -7h1v1h-1zM2 -6h1v1h-1zM7 -6h1v1h-1zM2 -5h1v1h-1zM7 -5h1v1h-1zM2 -4h1v1h-1zM7 -4h1v1h-1zM2 -3h1v1h-1zM7 -3h1v1h-1zM2 -2h6v1h-6zM2 -1h1v1h-1zM7 -1h1v1h-1z"/><path id="g74" d="M3 -10h1v1h-1zM3 -9h1v1h-1zM3 -8h1v1h-1zM8 -8h1v1h-1zM1 -7h8v1h-8zM3 -6h1v1h-1zM7 -6h1v1h-1zM3 -5h1v1h-1zM7 -5h1v1h-1zM3 -4h1v1h-1zM6 -4h1v1h-1zM3 -3h1v1h-1zM3 -2h1v1h-1zM4 -1h5v1h-5z"/><path id="g75" d="M1 -8h1v1h-1zM1 -7h1v1h-1zM1 -6h1v1h-1zM1 -5h1v1h-1zM1 -4h1v1h-1zM1 -3h1v1h-1zM1 -2h1v1h-1zM1 -1h1v1h-1z"/><path id="g76" d="M5 -10h1v1h-1zM5 -9h1v1h-1zM5 -8h1v1h-1zM1 -7h8v1h-8zM5 -6h1v1h-1zM5 -5h1v1h-1zM5 -4h1v1h-1zM4 -3h1v1h-1zM4 -2h1v1h-1zM3 -1h1v1h-1z"/><path id="g77" d="M1 -8h1v1h-1zM1 -7h1v1h-1zM1 -6h1v1h-1zM1 -5h1v1h-1zM1 -4h1v1h-1zM1 -3h1v1h-1zM1 -2h1v1h-1zM1 -1h5v1h-5z"/><path id="g78" d="M1 -8h5v1h-5zM1 -7h1v1h-1zM1 -6h1v1h-1zM1 -5h4v1h-4zM1 -4h1v1h-1zM1 -3h1v1h-1zM1 -2h1v1h-1zM1 -1h1v1h-1z"/><path id="g79" d="M1 -8h1v1h-1zM7 -8h1v1h-1zM2 -7h1v1h-1zM6 -7h1v1h-1zM2 -6h1v1h-1zM6 -6h1v1h-1zM2 -5h1v1h-1zM6 -5h1v1h-1zM3 -4h1v1h-1zM5 -4h1v1h-1zM3 -3h1v1h-1zM5 -3h1v1h-1zM3 -2h2v1h-2zM4 -1h1v1h-1z"/><path id="g80" d="M1 -8h4v1h-4zM1 -7h1v1h-1zM5 -7h2v1h-2zM1 -6h1v1h-1zM6 -6h1v1h-1zM1 -5h1v1h-1zM6 -5h1v1h-1zM1 -4h1v1h-1zM6 -4h1v1h-1zM1 -3h1v1h-1zM6 -3h1v1h-1zM1 -2h1v1h-1zM5 -2h2v1h-2zM1 -1h4v1h-4z"/><path id="g81" d="M1 -9h7v1h-7zM7 -8h1v1h-1zM7 -7h1v1h-1zM6 -6h1v1h-1zM6 -5h1v1h-1zM5 -4h2v1h-2zM5 -3h1v1h-1zM3 -2h2v1h-2zM2 -1h2v1h-2z"/><path id="g82" d="M4 -8h1v1h-1zM4 -7h1v1h-1zM1 -6h7v1h-7zM4 -5h1v1h-1zM3 -4h2v1h-2zM2 -3h1v1h-1zM4 -3h1v1h-1zM1 -2h1v1h-1zM4 -2h1v1h-1zM3 -1h2v1h-2z"/><path id="g83" d="M1 -8h8v1h-8zM7 -7h1v1h-1zM7 -6h1v1h-1zM3 -5h1v1h-1zM6 -5h1v1h-1zM4 -4h2v1h-2zM4 -3h2v1h-2zM5 -2h1v1h-1z"/><path id="g84" d="M6 -10h2v1h-2zM2 -9h4v1h-4zM5 -8h1v1h-1zM5 -7h1v1h-1zM1 -6h8v1h-8zM5 -5h1v1h-1zM5 -4h1v1h-1zM4 -3h1v1h-1zM4 -2h1v1h-1zM2 -1h2v1h-2z"/><path id="g85" d="M2 -10h1v1h-1zM7 -10h1v1h-1zM2 -9h1v1h-1zM7 -9h1v1h-1zM2 -8h1v1h-1zM7 -8h1v1h-1zM1 -7h9v1h-9zM2 -6h1v1h-1zM7 -6h1v1h-1zM2 -5h1v1h-1zM6 -5h1v1h-1zM2 -4h1v1h-1zM6 -4h1v1h-1zM6 -3h1v1h-1zM6 -2h1v1h-1zM4 -1h2v1h-2zM4 0h1v1h-1z"/><path id="g86" d="M9 -10h1v1h-1zM8 -9h1v1h-1zM3 -8h1v1h-1zM6 -8h1v1h-1zM3 -7h1v1h-1zM7 -7h1v1h-1zM2 -6h1v1h-1zM7 -6h1v1h-1zM2 -5h1v1h-1zM8 -5h1v1h-1zM2 -4h1v1h-1zM8 -4h1v1h-1zM1 -3h1v1h-1zM9 -3h1v1h-1zM1 -2h1v1h-1z"/><path id="g87" d="M3 -10h1v1h-1zM3 -9h5v1h-5zM2 -8h2v1h-2zM7 -8h1v1h-1zM2 -7h1v1h-1zM6 -7h1v1h-1zM1 -6h1v1h-1zM6 -6h1v1h-1zM6 -5h1v1h-1zM5 -4h1v1h-1zM4 -3h1v1h-1zM3 -2h2v1h-2zM2 -1h1v1h-1z"/><path id="g88" d="M2 -9h6v1h-6zM1 -6h7v1h-7zM7 -5h1v1h-1zM7 -4h1v1h-1zM6 -3h1v1h-1zM5 -2h2v1h-2zM4 -1h2v1h-2zM3 0h1v1h-1z"/><path id="g89" d="M1 -7h1v1h-1zM3 -7h1v1h-1zM6 -7h1v1h-1zM1 -6h1v1h-1zM3 -6h1v1h-1zM6 -6h1v1h-1zM1 -5h1v1h-1zM5 -5h1v1h-1zM5 -4h1v1h-1zM4 -3h1v1h-1zM3 -2h2v1h-2zM2 -1h1v1h-1z"/><path id="g90" d="M3 -10h1v1h-1zM4 -9h1v1h-1zM3 -8h5v1h-5zM1 -7h2v1h-2zM4 -7h1v1h-1zM4 -6h1v1h-1zM4 -5h5v1h-5zM1 -4h4v1h-4zM5 -3h1v1h-1zM5 -2h1v1h-1zM5 -1h1v1h-1z"/><path id="g91" d="M2 -7h4v1h-4zM5 -6h1v1h-1zM5 -5h1v1h-1zM5 -4h1v1h-1zM5 -3h1v1h-1zM1 -2h7v1h-7z"/><path id="g92" d="M7 -11h1v1h-1zM9 -11h1v1h-1zM3 -10h1v1h-1zM8 -10h2v1h-2zM3 -9h5v1h-5zM3 -8h1v1h-1zM7 -8h1v1h-1zM2 -7h2v1h-2zM7 -7h1v1h-1zM1 -6h2v1h-2zM4 -6h1v1h-1zM6 -6h1v1h-1zM1 -5h1v1h-1zM5 -5h2v1h-2zM5 -4h1v1h-1zM4 -3h2v1h-2zM3 -2h2v1h-2zM2 -1h2v1h-2z"/><path id="g93" d="M4 -10h1v1h-1zM4 -9h1v1h-1zM1 -8h7v1h-7zM1 -7h1v1h-1zM7 -7h1v1h-1zM1 -6h1v1h-1zM7 -6h1v1h-1zM1 -5h1v1h-1zM7 -5h1v1h-1zM6 -4h1v1h-1zM6 -3h1v1h-1zM5 -2h1v1h-1zM3 -1h2v1h-2zM3 0h1v1h-1z"/><path id="g94" d="M8 -11h1v1h-1zM2 -10h1v1h-1zM7 -10h2v1h-2zM2 -9h1v1h-1zM8 -9h1v1h-1zM2 -8h1v1h-1zM6 -8h2v1h-2zM2 -7h1v1h-1zM4 -7h3v1h-3zM2 -6h2v1h-2zM2 -5h1v1h-1zM2 -4h1v1h-1zM2 -3h1v1h-1zM2 -2h1v1h-1zM2 -1h6v1h-6z"/><path id="g95" d="M4 -8h1v1h-1zM4 -7h1v1h-1zM4 -6h1v1h-1zM4 -5h1v1h-1zM4 -4h1v1h-1zM4 -3h1v1h-1zM4 -2h1v1h-1zM1 -1h3v1h-3z"/><path id="g96" d="M1 -6h1v1h-1zM5 -6h1v1h-1zM2 -5h1v1h-1zM5 -5h1v1h-1zM2 -4h1v1h-1zM4 -4h1v1h-1zM2 -3h1v1h-1zM4 -3h1v1h-1zM3 -2h2v1h-2zM3 -1h1v1h-1z"/><path id="g97" d="M4 -8h1v1h-1zM3 -7h2v1h-2zM3 -6h1v1h-1zM5 -6h1v1h-1zM3 -5h1v1h-1zM5 -5h1v1h-1zM2 -4h1v1h-1zM6 -4h1v1h-1zM2 -3h5v1h-5zM2 -2h1v1h-1zM6 -2h1v1h-1zM1 -1h1v1h-1zM7 -1h1v1h-1z"/><path id="g98" d="M1 -1h1v1h-1z"/><path id="g99" d="M1 -6h3v1h-3zM1 -5h1v1h-1zM1 -4h1v1h-1zM1 -3h1v1h-1zM1 -2h1v1h-1zM1 -1h1v1h-1z"/><path id="g100" d="M1 -8h5v1h-5zM1 -7h1v1h-1zM5 -7h1v1h-1zM1 -6h1v1h-1zM5 -6h1v1h-1zM1 -5h5v1h-5zM1 -4h1v1h-1zM5 -4h1v1h-1zM1 -3h1v1h-1zM5 -3h1v1h-1zM1 -2h1v1h-1zM5 -2h1v1h-1zM1 -1h4v1h-4z"/><path id="g101" d="M1 -6h1v1h-1zM4 -6h1v1h-1zM1 -5h1v1h-1zM4 -5h1v1h-1zM1 -4h1v1h-1zM4 -4h1v1h-1zM1 -3h1v1h-1zM4 -3h1v1h-1zM1 -2h1v1h-1zM4 -2h1v1h-1zM1 -1h4v1h-4z"/><path id="g102" d="M3 -8h1v1h-1zM3 -6h1v1h-1zM3 -5h1v1h-1zM3 -4h1v1h-1zM3 -3h1v1h-1zM3 -2h1v1h-1zM3 -1h1v1h-1zM2 0h2v1h-2zM2 1h1v1h-1z"/><path id="g103" d="M4 -11h1v1h-1zM7 -11h1v1h-1zM4 -10h1v1h-1zM7 -10h1v1h-1zM4 -9h1v1h-1zM7 -9h1v1h-1zM1 -8h10v1h-10zM4 -7h1v1h-1zM7 -7h1v1h-1zM4 -6h1v1h-1zM7 -6h1v1h-1zM1 -5h10v1h-10zM7 -4h1v1h-1zM4 -3h1v1h-1zM8 -3h1v1h-1zM2 -2h2v1h-2zM9 -2h2v1h-2zM1 -1h1v1h-1zM10 -1h1v1h-1z"/><path id="g104" d="M4 -10h1v1h-1zM1 -9h10v1h-10zM4 -8h1v1h-1zM3 -7h7v1h-7zM2 -6h2v1h-2zM9 -6h1v1h-1zM1 -5h1v1h-1zM3 -5h7v1h-7zM3 -4h7v1h-7zM3 -3h1v1h-1zM9 -3h1v1h-1zM3 -2h1v1h-1zM9 -2h1v1h-1zM3 -1h1v1h-1zM7 -1h3v1h-3z"/><path id="g105" d="M8 -11h1v1h-1zM2 -10h1v1h-1zM7 -10h2v1h-2zM3 -9h1v1h-1zM7 -9h1v1h-1zM1 -7h1v1h-1zM8 -7h1v1h-1zM2 -6h1v1h-1zM8 -6h1v1h-1zM7 -5h1v1h-1zM6 -4h1v1h-1zM5 -3h1v1h-1zM3 -2h2v1h-2zM2 -1h1v1h-1z"/><path id="g106" d="M1 -9h1v1h-1zM7 -9h1v1h-1zM1 -8h1v1h-1zM7 -8h1v1h-1zM2 -7h1v1h-1zM7 -7h1v1h-1zM6 -6h1v1h-1zM6 -5h1v1h-1zM5 -4h1v1h-1zM4 -3h2v1h-2zM3 -2h2v1h-2zM2 -1h2v1h-2z"/><path id="g107" d="M2 -11h1v1h-1zM7 -11h1v1h-1zM2 -10h1v1h-1zM4 -10h7v1h-7zM2 -9h2v1h-2zM7 -9h1v1h-1zM1 -8h3v1h-3zM5 -8h6v1h-6zM0 -7h1v1h-1zM2 -7h1v1h-1zM4 -7h7v1h-7zM0 -6h1v1h-1zM2 -6h1v1h-1zM5 -6h5v1h-5zM2 -5h1v1h-1zM5 -5h5v1h-5zM2 -4h1v1h-1zM5 -4h1v1h-1zM9 -4h1v1h-1zM2 -3h1v1h-1zM5 -3h5v1h-5zM2 -2h1v1h-1zM5 -2h1v1h-1zM9 -2h1v1h-1zM2 -1h1v1h-1zM5 -1h1v1h-1zM8 -1h2v1h-2z"/><path id="g108" d="M3 -11h1v1h-1zM3 -10h1v1h-1zM6 -10h5v1h-5zM1 -9h6v1h-6zM10 -9h1v1h-1zM1 -8h6v1h-6zM8 -8h3v1h-3zM2 -7h1v1h-1zM4 -7h1v1h-1zM6 -7h1v1h-1zM2 -6h1v1h-1zM4 -6h1v1h-1zM6 -6h5v1h-5zM1 -5h7v1h-7zM10 -5h1v1h-1zM3 -4h1v1h-1zM6 -4h1v1h-1zM8 -4h1v1h-1zM10 -4h1v1h-1zM1 -3h6v1h-6zM9 -3h1v1h-1zM3 -2h1v1h-1zM6 -2h1v1h-1zM8 -2h3v1h-3zM3 -1h1v1h-1zM6 -1h2v1h-2zM11 -1h1v1h-1z"/><path id="g109" d="M6 -10h1v1h-1zM6 -9h1v1h-1zM6 -8h3v1h-3zM1 -7h6v1h-6zM5 -6h2v1h-2zM4 -5h1v1h-1zM6 -5h1v1h-1zM3 -4h2v1h-2zM6 -4h1v1h-1zM2 -3h2v1h-2zM6 -3h1v1h-1zM0 -2h2v1h-2zM6 -2h1v1h-1zM4 -1h3v1h-3z"/><path id="g110" d="M7 -10h2v1h-2zM7 -9h2v1h-2zM3 -8h2v1h-2zM7 -8h2v1h-2zM3 -7h1v1h-1zM5 -7h1v1h-1zM2 -6h1v1h-1zM6 -6h1v1h-1zM1 -5h1v1h-1zM7 -5h1v1h-1zM8 -4h1v1h-1zM9 -3h1v1h-1z"/><path id="g111" d="M2 -10h1v1h-1zM2 -9h1v1h-1zM2 -8h1v1h-1zM2 -7h1v1h-1zM2 -6h1v1h-1zM7 -6h1v1h-1zM2 -5h1v1h-1zM7 -5h1v1h-1zM2 -4h1v1h-1zM6 -4h1v1h-1zM2 -3h1v1h-1zM4 -3h2v1h-2zM2 -2h3v1h-3zM2 -1h1v1h-1z"/><path id="g112" d="M2 -11h1v1h-1zM4 -11h1v1h-1zM10 -11h1v1h-1zM2 -10h1v1h-1zM4 -10h1v1h-1zM8 -10h1v1h-1zM10 -10h1v1h-1zM1 -9h6v1h-6zM8 -9h1v1h-1zM10 -9h1v1h-1zM1 -8h1v1h-1zM4 -8h1v1h-1zM8 -8h1v1h-1zM10 -8h1v1h-1zM1 -7h6v1h-6zM8 -7h1v1h-1zM10 -7h1v1h-1zM4 -6h1v1h-1zM8 -6h1v1h-1zM10 -6h1v1h-1zM1 -5h6v1h-6zM8 -5h1v1h-1zM10 -5h1v1h-1zM1 -4h1v1h-1zM4 -4h1v1h-1zM6 -4h1v1h-1zM8 -4h1v1h-1zM10 -4h1v1h-1zM1 -3h1v1h-1zM4 -3h1v1h-1zM6 -3h1v1h-1zM10 -3h1v1h-1zM1 -2h1v1h-1zM4 -2h3v1h-3zM10 -2h1v1h-1zM4 -1h1v1h-1zM8 -1h3v1h-3z"/><path id="g113" d="M2 -10h1v1h-1zM4 -10h1v1h-1zM8 -10h3v1h-3zM1 -9h1v1h-1zM4 -9h5v1h-5zM10 -9h1v1h-1zM5 -8h1v1h-1zM8 -8h1v1h-1zM10 -8h1v1h-1zM2 -7h7v1h-7zM10 -7h1v1h-1zM1 -6h2v1h-2zM5 -6h1v1h-1zM8 -6h1v1h-1zM10 -6h1v1h-1zM2 -5h1v1h-1zM4 -5h5v1h-5zM10 -5h1v1h-1zM2 -4h1v1h-1zM4 -4h2v1h-2zM8 -4h1v1h-1zM10 -4h1v1h-1zM2 -3h1v1h-1zM4 -3h2v1h-2zM7 -3h4v1h-4zM2 -2h5v1h-5zM8 -2h1v1h-1zM2 -1h1v1h-1zM8 -1h1v1h-1z"/><path id="g114" d="M3 -11h1v1h-1zM7 -11h1v1h-1zM3 -10h1v1h-1zM7 -10h1v1h-1zM9 -10h1v1h-1zM1 -9h1v1h-1zM3 -9h1v1h-1zM7 -9h1v1h-1zM1 -8h1v1h-1zM3 -8h8v1h-8zM2 -7h2v1h-2zM7 -7h1v1h-1zM3 -6h1v1h-1zM7 -6h1v1h-1zM2 -5h2v1h-2zM6 -5h1v1h-1zM8 -5h1v1h-1zM1 -4h1v1h-1zM3 -4h1v1h-1zM6 -4h1v1h-1zM8 -4h1v1h-1zM3 -3h1v1h-1zM6 -3h1v1h-1zM9 -3h1v1h-1zM3 -2h1v1h-1zM5 -2h1v1h-1zM9 -2h2v1h-2zM3 -1h2v1h-2zM10 -1h1v1h-1z"/><path id="g115" d="M2 -11h2v1h-2zM6 -11h1v1h-1zM2 -10h1v1h-1zM5 -10h5v1h-5zM1 -9h1v1h-1zM3 -9h2v1h-2zM6 -9h1v1h-1zM10 -9h1v1h-1zM1 -8h10v1h-10zM1 -7h6v1h-6zM9 -7h1v1h-1zM1 -6h8v1h-8zM1 -5h1v1h-1zM4 -5h7v1h-7zM5 -4h1v1h-1zM2 -3h1v1h-1zM4 -3h1v1h-1zM6 -3h1v1h-1zM9 -3h1v1h-1zM1 -2h1v1h-1zM4 -2h1v1h-1zM8 -2h3v1h-3zM0 -1h2v1h-2zM4 -1h4v1h-4zM10 -1h1v1h-1z"/><path id="g116" d="M1 -10h1v1h-1zM4 -10h7v1h-7zM2 -9h1v1h-1zM4 -9h7v1h-7zM5 -8h5v1h-5zM5 -7h1v1h-1zM7 -7h1v1h-1zM9 -7h1v1h-1zM1 -6h2v1h-2zM5 -6h5v1h-5zM2 -5h1v1h-1zM5 -5h5v1h-5zM2 -4h1v1h-1zM4 -4h7v1h-7zM2 -3h1v1h-1zM7 -3h1v1h-1zM2 -2h2v1h-2zM7 -2h1v1h-1zM1 -1h1v1h-1zM4 -1h7v1h-7z"/><path id="g117" d="M2 -10h8v1h-8zM2 -9h1v1h-1zM6 -9h1v1h-1zM9 -9h1v1h-1zM2 -8h8v1h-8zM2 -7h1v1h-1zM6 -7h1v1h-1zM9 -7h1v1h-1zM2 -6h1v1h-1zM6 -6h1v1h-1zM9 -6h1v1h-1zM2 -5h8v1h-8zM2 -4h1v1h-1zM6 -4h1v1h-1zM9 -4h1v1h-1zM2 -3h1v1h-1zM6 -3h1v1h-1zM9 -3h1v1h-1zM1 -2h1v1h-1zM6 -2h1v1h-1zM8 -2h2v1h-2zM1 -1h1v1h-1z"/><path id="g118" d="M3 -11h1v1h-1zM3 -10h1v1h-1zM6 -10h5v1h-5zM1 -9h5v1h-5zM10 -9h1v1h-1zM3 -8h1v1h-1zM10 -8h1v1h-1zM1 -7h10v1h-10zM1 -6h1v1h-1zM3 -6h1v1h-1zM6 -6h1v1h-1zM1 -5h1v1h-1zM3 -5h4v1h-4zM11 -5h1v1h-1zM1 -4h1v1h-1zM3 -4h1v1h-1zM6 -4h1v1h-1zM11 -4h1v1h-1zM1 -3h3v1h-3zM6 -3h5v1h-5zM1 -2h1v1h-1zM3 -2h2v1h-2zM4 -1h8v1h-8z"/><path id="g119" d="M4 -11h3v1h-3zM8 -11h1v1h-1zM1 -10h3v1h-3zM8 -10h1v1h-1zM1 -9h6v1h-6zM8 -9h1v1h-1zM3 -8h1v1h-1zM7 -8h4v1h-4zM1 -7h6v1h-6zM8 -7h1v1h-1zM10 -7h1v1h-1zM1 -6h6v1h-6zM8 -6h1v1h-1zM10 -6h1v1h-1zM1 -5h6v1h-6zM8 -5h1v1h-1zM10 -5h1v1h-1zM1 -4h5v1h-5zM8 -4h1v1h-1zM10 -4h1v1h-1zM3 -3h1v1h-1zM7 -3h1v1h-1zM10 -3h1v1h-1zM1 -2h9v1h-9z"/><path id="g120" d="M7 -11h1v1h-1zM1 -10h4v1h-4zM7 -10h1v1h-1zM1 -9h1v1h-1zM4 -9h7v1h-7zM1 -8h1v1h-1zM4 -8h1v1h-1zM7 -8h1v1h-1zM1 -7h1v1h-1zM4 -7h7v1h-7zM1 -6h4v1h-4zM9 -6h1v1h-1zM1 -5h1v1h-1zM4 -5h7v1h-7zM1 -4h1v1h-1zM4 -4h2v1h-2zM9 -4h1v1h-1zM1 -3h4v1h-4zM6 -3h1v1h-1zM9 -3h1v1h-1zM1 -2h1v1h-1zM9 -2h1v1h-1zM7 -1h3v1h-3z"/><path id="g121" d="M1 -3h1v1h-1zM2 -2h1v1h-1zM2 -1h1v1h-1z"/><path id="g122" d="M4 -10h1v1h-1zM1 -9h6v1h-6zM3 -8h1v1h-1zM2 -7h3v1h-3zM2 -6h1v1h-1zM5 -6h1v1h-1zM7 -6h2v1h-2zM1 -5h1v1h-1zM5 -5h2v1h-2zM1 -4h1v1h-1zM4 -4h2v1h-2zM3 -3h1v1h-1zM5 -3h1v1h-1zM3 -2h1v1h-1zM3 -1h5v1h-5z"/><path id="g123" d="M5 -11h1v1h-1zM5 -10h1v1h-1zM2 -9h8v1h-8zM2 -8h1v1h-1zM9 -8h1v1h-1zM2 -7h8v1h-8zM2 -6h1v1h-1zM9 -6h1v1h-1zM2 -5h8v1h-8zM2 -4h1v1h-1zM9 -4h1v1h-1zM2 -3h1v1h-1zM9 -3h1v1h-1zM2 -2h8v1h-8zM2 -1h1v1h-1zM9 -1h1v1h-1z"/><path id="g124" d="M2 -10h1v1h-1zM7 -10h3v1h-3zM3 -9h1v1h-1zM5 -9h3v1h-3zM7 -8h1v1h-1zM1 -7h2v1h-2zM4 -7h7v1h-7zM7 -6h1v1h-1zM5 -5h5v1h-5zM2 -4h2v1h-2zM5 -4h1v1h-1zM9 -4h1v1h-1zM2 -3h1v1h-1zM5 -3h1v1h-1zM9 -3h1v1h-1zM1 -2h2v1h-2zM5 -2h5v1h-5zM5 -1h1v1h-1zM9 -1h1v1h-1z"/><path id="g125" d="M2 -11h1v1h-1zM7 -11h1v1h-1zM2 -10h1v1h-1zM5 -10h1v1h-1zM7 -10h1v1h-1zM2 -9h2v1h-2zM5 -9h1v1h-1zM7 -9h1v1h-1zM1 -8h3v1h-3zM5 -8h6v1h-6zM0 -7h1v1h-1zM2 -7h1v1h-1zM4 -7h1v1h-1zM7 -7h1v1h-1zM0 -6h1v1h-1zM2 -6h1v1h-1zM7 -6h1v1h-1zM2 -5h1v1h-1zM5 -5h6v1h-6zM2 -4h1v1h-1zM7 -4h1v1h-1zM2 -3h1v1h-1zM7 -3h1v1h-1zM2 -2h1v1h-1zM7 -2h1v1h-1zM2 -1h1v1h-1zM4 -1h7v1h-7z"/><path id="g126" d="M5 -10h1v1h-1zM5 -9h1v1h-1zM1 -8h8v1h-8zM5 -7h1v1h-1zM3 -6h3v1h-3zM3 -5h1v1h-1zM5 -5h1v1h-1zM3 -4h1v1h-1zM5 -4h1v1h-1zM3 -3h3v1h-3zM5 -2h1v1h-1zM4 -1h1v1h-1zM3 0h2v1h-2z"/><path id="g127" d="M5 -10h1v1h-1zM2 -9h4v1h-4zM4 -8h1v1h-1zM3 -7h2v1h-2zM3 -6h4v1h-4zM2 -5h2v1h-2zM7 -5h1v1h-1zM1 -4h1v1h-1zM7 -4h1v1h-1zM3 -3h2v1h-2zM7 -3h1v1h-1zM2 -2h1v1h-1zM5 -2h1v1h-1zM7 -2h1v1h-1zM3 -1h4v1h-4z"/><path id="g128" d="M4 -9h4v1h-4zM2 -8h2v1h-2zM5 -8h1v1h-1zM8 -8h1v1h-1zM1 -7h1v1h-1zM5 -7h1v1h-1zM9 -7h1v1h-1zM1 -6h1v1h-1zM4 -6h1v1h-1zM9 -6h1v1h-1zM1 -5h1v1h-1zM4 -5h1v1h-1zM9 -5h1v1h-1zM1 -4h1v1h-1zM4 -4h1v1h-1zM9 -4h1v1h-1zM1 -3h1v1h-1zM3 -3h1v1h-1zM8 -3h2v1h-2zM2 -2h2v1h-2zM7 -2h2v1h-2zM5 -1h2v1h-2z"/><path id="g129" d="M1 -10h3v1h-3zM6 -10h3v1h-3zM1 -9h4v1h-4zM6 -9h1v1h-1zM8 -9h1v1h-1zM6 -8h1v1h-1zM8 -8h1v1h-1zM10 -8h1v1h-1zM1 -7h3v1h-3zM5 -7h1v1h-1zM8 -7h3v1h-3zM1 -6h3v1h-3zM5 -6h5v1h-5zM6 -5h1v1h-1zM9 -5h1v1h-1zM1 -4h4v1h-4zM6 -4h1v1h-1zM8 -4h1v1h-1zM1 -3h1v1h-1zM4 -3h1v1h-1zM7 -3h1v1h-1zM1 -2h4v1h-4zM6 -2h1v1h-1zM8 -2h3v1h-3zM1 -1h1v1h-1zM5 -1h1v1h-1zM10 -1h1v1h-1z"/><path id="g130" d="M6 -11h1v1h-1zM6 -10h1v1h-1zM1 -9h10v1h-10zM1 -8h1v1h-1zM10 -8h1v1h-1zM3 -7h6v1h-6zM6 -6h1v1h-1zM3 -5h1v1h-1zM6 -5h4v1h-4zM3 -4h1v1h-1zM6 -4h1v1h-1zM2 -3h1v1h-1zM4 -3h1v1h-1zM6 -3h1v1h-1zM1 -2h2v1h-2zM5 -2h7v1h-7zM1 -1h1v1h-1z"/><path id="g131" d="M2 -10h1v1h-1zM2 -9h1v1h-1zM2 -8h1v1h-1zM2 -7h1v1h-1zM2 -6h1v1h-1zM2 -5h1v1h-1zM2 -4h1v1h-1zM2 -3h1v1h-1zM7 -3h1v1h-1zM2 -2h1v1h-1zM6 -2h1v1h-1zM2 -1h4v1h-4z"/><path id="g132" d="M5 -10h1v1h-1zM5 -9h1v1h-1zM1 -8h7v1h-7zM5 -7h1v1h-1zM2 -6h6v1h-6zM5 -5h1v1h-1zM5 -4h1v1h-1zM1 -3h5v1h-5zM1 -2h1v1h-1zM5 -2h3v1h-3zM1 -1h4v1h-4z"/><path id="g133" d="M1 -10h4v1h-4zM6 -10h5v1h-5zM1 -9h1v1h-1zM4 -9h1v1h-1zM6 -9h1v1h-1zM8 -9h1v1h-1zM1 -8h4v1h-4zM6 -8h1v1h-1zM8 -8h1v1h-1zM1 -7h1v1h-1zM4 -7h1v1h-1zM6 -7h1v1h-1zM8 -7h1v1h-1zM1 -6h10v1h-10zM1 -5h1v1h-1zM3 -5h1v1h-1zM8 -5h1v1h-1zM1 -4h1v1h-1zM4 -4h1v1h-1zM7 -4h2v1h-2zM1 -3h1v1h-1zM3 -3h4v1h-4zM8 -3h1v1h-1zM0 -2h3v1h-3zM5 -2h2v1h-2zM8 -2h1v1h-1zM10 -2h1v1h-1zM4 -1h1v1h-1zM8 -1h3v1h-3z"/><path id="g134" d="M3 -11h1v1h-1zM7 -11h1v1h-1zM2 -10h1v1h-1zM4 -10h7v1h-7zM2 -9h1v1h-1zM7 -9h1v1h-1zM2 -8h1v1h-1zM6 -8h4v1h-4zM1 -7h2v1h-2zM4 -7h1v1h-1zM6 -7h1v1h-1zM9 -7h1v1h-1zM1 -6h2v1h-2zM4 -6h1v1h-1zM6 -6h4v1h-4zM2 -5h1v1h-1zM4 -5h1v1h-1zM6 -5h4v1h-4zM2 -4h1v1h-1zM4 -4h1v1h-1zM6 -4h1v1h-1zM9 -4h1v1h-1zM2 -3h1v1h-1zM4 -3h1v1h-1zM6 -3h4v1h-4zM2 -2h1v1h-1zM4 -2h7v1h-7zM2 -1h1v1h-1zM4 -1h1v1h-1z"/><path id="g135" d="M1 -6h1v1h-1zM1 -1h1v1h-1z"/><path id="g136" d="M1 -3h3v1h-3zM1 -2h1v1h-1zM3 -2h1v1h-1zM1 -1h3v1h-3z"/><path id="g137" d="M3 -10h3v1h-3zM2 -9h1v1h-1zM5 -9h1v1h-1zM1 -8h1v1h-1zM5 -8h1v1h-1zM5 -7h1v1h-1zM5 -6h1v1h-1zM4 -5h1v1h-1zM4 -4h1v1h-1zM4 -3h1v1h-1zM4 -1h1v1h-1z"/><path id="g138" d="M3 -11h8v1h-8zM2 -10h1v1h-1zM7 -10h1v1h-1zM2 -9h1v1h-1zM5 -9h5v1h-5zM2 -8h1v1h-1zM5 -8h5v1h-5zM1 -7h2v1h-2zM5 -7h5v1h-5zM1 -6h10v1h-10zM2 -5h1v1h-1zM4 -5h1v1h-1zM6 -5h3v1h-3zM2 -4h1v1h-1zM6 -4h4v1h-4zM2 -3h1v1h-1zM4 -3h3v1h-3zM8 -3h1v1h-1zM2 -2h2v1h-2zM7 -2h2v1h-2zM2 -1h5v1h-5zM9 -1h2v1h-2z"/><path id="g139" d="M6 -11h1v1h-1zM3 -10h1v1h-1zM6 -10h1v1h-1zM3 -9h7v1h-7zM2 -8h1v1h-1zM6 -8h1v1h-1zM2 -7h1v1h-1zM6 -7h1v1h-1zM1 -6h10v1h-10zM4 -5h1v1h-1zM7 -5h1v1h-1zM4 -4h1v1h-1zM7 -4h1v1h-1zM4 -3h1v1h-1zM7 -3h1v1h-1zM10 -3h1v1h-1zM3 -2h1v1h-1zM7 -2h1v1h-1zM10 -2h1v1h-1zM1 -1h2v1h-2zM7 -1h4v1h-4z"/><path id="g140" d="M6 -11h1v1h-1zM2 -10h9v1h-9zM2 -9h1v1h-1zM4 -9h1v1h-1zM7 -9h1v1h-1zM2 -8h9v1h-9zM2 -7h1v1h-1zM4 -7h1v1h-1zM7 -7h1v1h-1zM2 -6h1v1h-1zM4 -6h4v1h-4zM2 -5h7v1h-7zM2 -4h1v1h-1zM4 -4h1v1h-1zM8 -4h1v1h-1zM2 -3h1v1h-1zM5 -3h3v1h-3zM1 -2h1v1h-1zM5 -2h4v1h-4zM1 -1h1v1h-1zM3 -1h2v1h-2zM9 -1h2v1h-2z"/><path id="g141" d="M2 -8h3v1h-3zM1 -7h1v1h-1zM5 -7h1v1h-1zM1 -6h1v1h-1zM5 -6h1v1h-1zM1 -5h1v1h-1zM5 -5h1v1h-1zM1 -4h1v1h-1zM5 -4h1v1h-1zM1 -3h1v1h-1zM5 -3h1v1h-1zM1 -2h1v1h-1zM5 -2h1v1h-1zM2 -1h3v1h-3z"/><path id="g142" d="M1 -4h2v1h-2z"/><path id="g143" d="M2 -8h4v1h-4zM1 -7h1v1h-1zM1 -6h1v1h-1zM1 -5h1v1h-1zM3 -5h2v1h-2zM1 -4h1v1h-1zM5 -4h1v1h-1zM5 -3h1v1h-1zM1 -2h1v1h-1zM5 -2h1v1h-1zM2 -1h3v1h-3z"/><path id="g144" d="M2 -8h3v1h-3zM1 -7h1v1h-1zM5 -7h1v1h-1zM5 -6h1v1h-1zM5 -5h1v1h-1zM3 -4h2v1h-2zM2 -3h1v1h-1zM1 -2h1v1h-1zM1 -1h5v1h-5z"/><path id="g145" d="M6 -11h1v1h-1zM1 -10h10v1h-10zM1 -9h1v1h-1zM10 -9h1v1h-1zM1 -8h1v1h-1zM6 -8h1v1h-1zM10 -8h1v1h-1zM2 -7h8v1h-8zM2 -6h8v1h-8zM6 -5h1v1h-1zM1 -4h10v1h-10zM6 -3h2v1h-2zM4 -2h2v1h-2zM7 -2h2v1h-2zM1 -1h3v1h-3zM9 -1h2v1h-2z"/><path id="g146" d="M3 -10h1v1h-1zM5 -10h6v1h-6zM2 -9h1v1h-1zM1 -8h1v1h-1zM3 -7h8v1h-8zM2 -6h2v1h-2zM8 -6h1v1h-1zM1 -5h3v1h-3zM8 -5h1v1h-1zM3 -4h1v1h-1zM8 -4h1v1h-1zM3 -3h1v1h-1zM8 -3h1v1h-1zM3 -2h1v1h-1zM8 -2h1v1h-1zM3 -1h1v1h-1zM6 -1h3v1h-3z"/><path id="g147" d="M1 -10h10v1h-10zM1 -9h10v1h-10zM1 -8h1v1h-1zM5 -8h2v1h-2zM10 -8h1v1h-1zM1 -7h10v1h-10zM1 -6h1v1h-1zM4 -6h4v1h-4zM10 -6h1v1h-1zM1 -5h1v1h-1zM4 -5h1v1h-1zM7 -5h1v1h-1zM10 -5h1v1h-1zM1 -4h1v1h-1zM4 -4h4v1h-4zM10 -4h1v1h-1zM1 -3h1v1h-1zM4 -3h4v1h-4zM10 -3h1v1h-1zM1 -2h1v1h-1zM4 -2h1v1h-1zM10 -2h1v1h-1zM1 -1h1v1h-1zM8 -1h3v1h-3z"/><path id="g148" d="M5 -10h1v1h-1zM5 -9h1v1h-1zM5 -8h1v1h-1zM5 -7h5v1h-5zM5 -6h1v1h-1zM5 -5h1v1h-1zM5 -4h1v1h-1zM5 -3h1v1h-1zM1 -2h10v1h-10z"/><path id="g149" d="M1 -10h3v1h-3zM5 -10h5v1h-5zM1 -9h1v1h-1zM3 -9h1v1h-1zM5 -9h1v1h-1zM9 -9h1v1h-1zM1 -8h1v1h-1zM3 -8h1v1h-1zM5 -8h5v1h-5zM1 -7h2v1h-2zM5 -7h1v1h-1zM9 -7h1v1h-1zM1 -6h1v1h-1zM3 -6h1v1h-1zM5 -6h5v1h-5zM1 -5h1v1h-1zM3 -5h1v1h-1zM5 -5h1v1h-1zM7 -5h1v1h-1zM1 -4h1v1h-1zM3 -4h1v1h-1zM5 -4h1v1h-1zM7 -4h1v1h-1zM9 -4h1v1h-1zM1 -3h3v1h-3zM5 -3h1v1h-1zM8 -3h1v1h-1zM1 -2h1v1h-1zM5 -2h1v1h-1zM7 -2h1v1h-1zM9 -2h1v1h-1zM1 -1h1v1h-1zM4 -1h3v1h-3zM10 -1h1v1h-1z"/><path id="g150" d="M2 -1h1v1h-1zM2 0h1v1h-1zM1 1h1v1h-1z"/><path id="g151" d="M2 -8h3v1h-3zM1 -7h1v1h-1zM5 -7h1v1h-1zM1 -6h1v1h-1zM5 -6h1v1h-1zM1 -5h1v1h-1zM5 -5h1v1h-1zM2 -4h4v1h-4zM5 -3h1v1h-1zM1 -2h1v1h-1zM5 -2h1v1h-1zM2 -1h3v1h-3z"/><path id="g152" d="M2 -8h4v1h-4zM1 -7h1v1h-1zM1 -6h1v1h-1zM3 -6h2v1h-2zM1 -5h2v1h-2zM5 -5h1v1h-1zM1 -4h1v1h-1zM5 -4h1v1h-1zM1 -3h1v1h-1zM5 -3h1v1h-1zM1 -2h1v1h-1zM5 -2h1v1h-1zM2 -1h3v1h-3z"/><path id="g153" d="M1 -10h3v1h-3zM6 -10h1v1h-1zM3 -9h1v1h-1zM6 -9h1v1h-1zM9 -9h2v1h-2zM1 -8h3v1h-3zM5 -8h4v1h-4zM10 -8h1v1h-1zM1 -7h1v1h-1zM3 -7h1v1h-1zM7 -7h1v1h-1zM1 -6h1v1h-1zM5 -6h6v1h-6zM1 -5h3v1h-3zM5 -5h1v1h-1zM7 -5h1v1h-1zM10 -5h1v1h-1zM1 -4h1v1h-1zM3 -4h1v1h-1zM5 -4h6v1h-6zM3 -3h1v1h-1zM7 -3h1v1h-1zM10 -3h1v1h-1zM3 -2h1v1h-1zM7 -2h4v1h-4zM1 -1h3v1h-3zM5 -1h2v1h-2zM11 -1h1v1h-1z"/><path id="g154" d="M3 -11h1v1h-1zM7 -11h1v1h-1zM3 -10h8v1h-8zM2 -9h1v1h-1zM2 -8h1v1h-1zM5 -8h5v1h-5zM1 -7h2v1h-2zM5 -7h5v1h-5zM1 -6h2v1h-2zM2 -5h1v1h-1zM4 -5h7v1h-7zM2 -4h1v1h-1zM5 -4h5v1h-5zM2 -3h1v1h-1zM7 -3h1v1h-1zM2 -2h1v1h-1zM7 -2h1v1h-1zM2 -1h1v1h-1zM6 -1h2v1h-2z"/><path id="g155" d="M6 -11h1v1h-1zM6 -10h1v1h-1zM6 -9h1v1h-1zM3 -8h1v1h-1zM6 -8h1v1h-1zM3 -7h1v1h-1zM6 -7h4v1h-4zM3 -6h1v1h-1zM6 -6h1v1h-1zM3 -5h1v1h-1zM6 -5h1v1h-1zM3 -4h1v1h-1zM6 -4h1v1h-1zM3 -3h1v1h-1zM6 -3h1v1h-1zM1 -2h10v1h-10z"/><path id="g156" d="M3 -11h1v1h-1zM3 -10h1v1h-1zM6 -10h5v1h-5zM1 -9h5v1h-5zM7 -9h1v1h-1zM10 -9h1v1h-1zM3 -8h1v1h-1zM7 -8h1v1h-1zM10 -8h1v1h-1zM1 -7h6v1h-6zM8 -7h3v1h-3zM3 -6h1v1h-1zM6 -6h5v1h-5zM1 -5h1v1h-1zM3 -5h2v1h-2zM6 -5h1v1h-1zM10 -5h1v1h-1zM1 -4h1v1h-1zM3 -4h1v1h-1zM6 -4h1v1h-1zM10 -4h1v1h-1zM1 -3h3v1h-3zM6 -3h5v1h-5zM1 -2h1v1h-1zM3 -2h9v1h-9z"/><path id="g157" d="M1 -10h2v1h-2zM5 -10h5v1h-5zM2 -9h1v1h-1zM5 -9h1v1h-1zM7 -9h3v1h-3zM5 -8h1v1h-1zM7 -8h1v1h-1zM9 -8h1v1h-1zM4 -7h7v1h-7zM1 -6h2v1h-2zM4 -6h1v1h-1zM10 -6h1v1h-1zM2 -5h1v1h-1zM4 -5h1v1h-1zM6 -5h3v1h-3zM10 -5h1v1h-1zM2 -4h1v1h-1zM4 -4h1v1h-1zM6 -4h3v1h-3zM10 -4h1v1h-1zM2 -3h1v1h-1zM4 -3h1v1h-1zM6 -3h1v1h-1zM9 -3h2v1h-2zM1 -2h1v1h-1zM3 -2h9v1h-9z"/><path id="g158" d="M2 -10h1v1h-1zM1 -9h1v1h-1zM6 -9h3v1h-3zM1 -8h1v1h-1zM4 -8h2v1h-2zM1 -7h1v1h-1zM1 -6h1v1h-1zM1 -5h1v1h-1zM1 -4h1v1h-1zM4 -4h1v1h-1zM1 -3h2v1h-2zM4 -3h1v1h-1zM1 -2h2v1h-2zM4 -2h1v1h-1zM1 -1h2v1h-2zM5 -1h4v1h-4z"/><path id="g159" d="M4 -10h1v1h-1zM3 -9h1v1h-1zM3 -8h1v1h-1zM7 -8h1v1h-1zM1 -7h5v1h-5zM8 -7h1v1h-1zM3 -6h1v1h-1zM6 -6h1v1h-1zM9 -6h1v1h-1zM3 -5h1v1h-1zM6 -5h1v1h-1zM9 -5h1v1h-1zM2 -4h1v1h-1zM6 -4h1v1h-1zM2 -3h1v1h-1zM6 -3h1v1h-1zM1 -2h1v1h-1zM3 -2h1v1h-1zM5 -2h1v1h-1zM1 -1h1v1h-1zM3 -1h3v1h-3z"/><path id="g160" d="M2 -10h1v1h-1zM8 -10h1v1h-1zM3 -9h1v1h-1zM7 -9h2v1h-2zM3 -8h1v1h-1zM3 -7h1v1h-1zM5 -7h2v1h-2zM3 -6h2v1h-2zM2 -5h1v1h-1zM1 -4h1v1h-1zM1 -3h1v1h-1zM1 -2h1v1h-1zM2 -1h6v1h-6z"/><path id="g161" d="M3 -10h2v1h-2zM5 -9h1v1h-1zM2 -7h4v1h-4zM1 -6h1v1h-1zM6 -6h1v1h-1zM6 -5h1v1h-1zM6 -4h1v1h-1zM5 -3h1v1h-1zM5 -2h1v1h-1zM4 -1h1v1h-1zM3 0h1v1h-1z"/><path id="g162" d="M2 -9h5v1h-5zM4 -8h2v1h-2zM1 -4h1v1h-1zM1 -3h1v1h-1zM1 -2h1v1h-1zM2 -1h6v1h-6z"/><path id="g163" d="M2 -10h1v1h-1zM6 -10h1v1h-1zM1 -9h1v1h-1zM6 -9h1v1h-1zM1 -8h1v1h-1zM4 -8h5v1h-5zM1 -7h1v1h-1zM6 -7h1v1h-1zM1 -6h1v1h-1zM6 -6h1v1h-1zM1 -5h1v1h-1zM6 -5h1v1h-1zM1 -4h2v1h-2zM6 -4h1v1h-1zM1 -3h2v1h-2zM4 -3h4v1h-4zM1 -2h3v1h-3zM7 -2h3v1h-3zM1 -1h2v1h-2zM4 -1h3v1h-3z"/><path id="g164" d="M1 -10h3v1h-3zM6 -10h1v1h-1zM9 -10h1v1h-1zM1 -9h10v1h-10zM8 -8h1v1h-1zM1 -7h3v1h-3zM8 -7h1v1h-1zM1 -6h3v1h-3zM5 -6h6v1h-6zM8 -5h1v1h-1zM1 -4h10v1h-10zM1 -3h1v1h-1zM4 -3h1v1h-1zM8 -3h1v1h-1zM1 -2h4v1h-4zM8 -2h1v1h-1zM1 -1h1v1h-1zM4 -1h1v1h-1zM8 -1h1v1h-1z"/><path id="g165" d="M3 -11h1v1h-1zM3 -10h1v1h-1zM6 -10h5v1h-5zM1 -9h2v1h-2zM4 -9h1v1h-1zM6 -9h1v1h-1zM8 -9h1v1h-1zM10 -9h1v1h-1zM2 -8h2v1h-2zM6 -8h1v1h-1zM8 -8h1v1h-1zM10 -8h1v1h-1zM3 -7h2v1h-2zM6 -7h1v1h-1zM8 -7h1v1h-1zM10 -7h1v1h-1zM1 -6h10v1h-10zM3 -5h1v1h-1zM6 -5h1v1h-1zM8 -5h1v1h-1zM10 -5h1v1h-1zM1 -4h1v1h-1zM3 -4h2v1h-2zM6 -4h1v1h-1zM8 -4h1v1h-1zM10 -4h1v1h-1zM1 -3h1v1h-1zM3 -3h2v1h-2zM6 -3h1v1h-1zM8 -3h1v1h-1zM10 -3h1v1h-1zM1 -2h1v1h-1zM3 -2h1v1h-1zM6 -2h5v1h-5zM3 -1h1v1h-1zM6 -1h1v1h-1zM10 -1h1v1h-1z"/><path id="g166" d="M6 -11h1v1h-1zM6 -10h1v1h-1zM1 -9h10v1h-10zM1 -8h1v1h-1zM6 -8h1v1h-1zM10 -8h1v1h-1zM1 -7h1v1h-1zM6 -7h1v1h-1zM10 -7h1v1h-1zM1 -6h1v1h-1zM5 -6h1v1h-1zM7 -6h1v1h-1zM10 -6h1v1h-1zM1 -5h1v1h-1zM5 -5h1v1h-1zM8 -5h1v1h-1zM10 -5h1v1h-1zM1 -4h1v1h-1zM3 -4h2v1h-2zM9 -4h2v1h-2zM1 -3h1v1h-1zM10 -3h1v1h-1zM1 -2h1v1h-1zM10 -2h1v1h-1zM1 -1h1v1h-1zM8 -1h3v1h-3z"/><path id="g167" d="M6 -11h1v1h-1zM1 -10h10v1h-10zM1 -9h1v1h-1zM10 -9h1v1h-1zM1 -8h1v1h-1zM4 -8h1v1h-1zM7 -8h2v1h-2zM10 -8h1v1h-1zM2 -7h2v1h-2zM6 -7h1v1h-1zM9 -7h1v1h-1zM4 -6h2v1h-2zM7 -6h2v1h-2zM3 -5h1v1h-1zM8 -5h2v1h-2zM1 -4h8v1h-8zM10 -4h1v1h-1zM3 -3h1v1h-1zM8 -3h1v1h-1zM3 -2h6v1h-6zM3 -1h1v1h-1zM8 -1h1v1h-1z"/><path id="g168" d="M5 -11h1v1h-1zM4 -10h1v1h-1zM7 -10h1v1h-1zM2 -9h8v1h-8zM5 -8h1v1h-1zM1 -7h10v1h-10zM4 -6h1v1h-1zM7 -6h1v1h-1zM2 -5h2v1h-2zM5 -5h1v1h-1zM8 -5h2v1h-2zM1 -4h1v1h-1zM3 -4h2v1h-2zM6 -4h2v1h-2zM10 -4h1v1h-1zM5 -3h1v1h-1zM8 -3h1v1h-1zM3 -2h2v1h-2zM6 -2h2v1h-2zM3 -1h3v1h-3z"/><path id="g169" d="M1 -10h10v1h-10zM1 -9h1v1h-1zM4 -9h1v1h-1zM7 -9h1v1h-1zM10 -9h1v1h-1zM1 -8h1v1h-1zM4 -8h1v1h-1zM6 -8h5v1h-5zM1 -7h10v1h-10zM1 -6h1v1h-1zM4 -6h1v1h-1zM6 -6h1v1h-1zM10 -6h1v1h-1zM1 -5h4v1h-4zM6 -5h5v1h-5zM7 -4h1v1h-1zM9 -4h1v1h-1zM1 -3h2v1h-2zM4 -3h1v1h-1zM7 -3h1v1h-1zM10 -3h1v1h-1zM1 -2h1v1h-1zM4 -2h1v1h-1zM7 -2h1v1h-1zM10 -2h2v1h-2z"/><path id="g170" d="M5 -11h1v1h-1zM5 -10h1v1h-1zM5 -9h1v1h-1zM5 -8h1v1h-1zM1 -7h10v1h-10zM5 -6h1v1h-1zM5 -5h1v1h-1zM5 -4h1v1h-1zM5 -3h1v1h-1zM5 -2h1v1h-1zM5 -1h1v1h-1z"/><path id="g171" d="M4 -10h1v1h-1zM7 -10h1v1h-1zM4 -9h1v1h-1zM8 -9h1v1h-1zM3 -8h1v1h-1zM8 -8h2v1h-2zM2 -7h2v1h-2zM9 -7h2v1h-2zM1 -6h11v1h-11zM5 -5h1v1h-1zM9 -5h1v1h-1zM5 -4h1v1h-1zM9 -4h1v1h-1zM4 -3h2v1h-2zM9 -3h1v1h-1zM4 -2h1v1h-1zM8 -2h1v1h-1zM2 -1h2v1h-2zM6 -1h3v1h-3z"/><path id="g172" d="M3 -10h2v1h-2zM6 -10h5v1h-5zM2 -9h1v1h-1zM4 -9h1v1h-1zM7 -9h1v1h-1zM10 -9h1v1h-1zM2 -8h4v1h-4zM7 -8h1v1h-1zM10 -8h1v1h-1zM1 -7h3v1h-3zM5 -7h2v1h-2zM8 -7h3v1h-3zM2 -6h4v1h-4zM8 -6h1v1h-1zM2 -5h2v1h-2zM5 -5h6v1h-6zM2 -4h5v1h-5zM8 -4h1v1h-1zM2 -3h1v1h-1zM5 -3h6v1h-6zM2 -2h1v1h-1zM5 -2h1v1h-1zM8 -2h1v1h-1zM1 -1h1v1h-1zM3 -1h3v1h-3zM8 -1h1v1h-1z"/><path id="g173" d="M4 -10h1v1h-1zM4 -9h1v1h-1zM1 -8h5v1h-5zM3 -7h1v1h-1zM3 -6h1v1h-1zM5 -6h4v1h-4zM3 -5h1v1h-1zM2 -4h1v1h-1zM2 -3h1v1h-1zM5 -3h1v1h-1zM2 -2h1v1h-1zM5 -2h1v1h-1zM1 -1h1v1h-1zM6 -1h4v1h-4z"/><path id="g174" d="M2 -9h7v1h-7zM1 -8h1v1h-1zM5 -8h1v1h-1zM4 -7h1v1h-1zM8 -7h1v1h-1zM4 -6h1v1h-1zM7 -6h1v1h-1zM3 -5h1v1h-1zM3 -4h1v1h-1zM3 -3h1v1h-1zM4 -2h1v1h-1zM5 -1h3v1h-3z"/><path id="g175" d="M6 -11h1v1h-1zM1 -10h10v1h-10zM5 -9h1v1h-1zM7 -9h1v1h-1zM2 -8h2v1h-2zM5 -8h1v1h-1zM7 -8h1v1h-1zM9 -8h1v1h-1zM1 -7h2v1h-2zM4 -7h1v1h-1zM6 -7h2v1h-2zM10 -7h1v1h-1zM3 -6h1v1h-1zM5 -6h1v1h-1zM4 -5h5v1h-5zM3 -4h3v1h-3zM8 -4h1v1h-1zM2 -3h1v1h-1zM6 -3h2v1h-2zM4 -2h6v1h-6zM1 -1h3v1h-3zM10 -1h1v1h-1z"/><path id="g176" d="M1 -10h10v1h-10zM6 -9h1v1h-1zM2 -8h8v1h-8zM2 -7h8v1h-8zM2 -6h1v1h-1zM6 -6h1v1h-1zM9 -6h1v1h-1zM2 -5h8v1h-8zM3 -4h1v1h-1zM6 -4h1v1h-1zM9 -4h1v1h-1zM3 -3h2v1h-2zM6 -3h1v1h-1zM5 -2h2v1h-2zM1 -1h4v1h-4zM7 -1h4v1h-4z"/><path id="g177" d="M2 -9h7v1h-7zM1 -8h1v1h-1zM5 -8h1v1h-1zM4 -7h1v1h-1zM4 -6h1v1h-1zM3 -5h1v1h-1zM3 -4h1v1h-1zM3 -3h1v1h-1zM4 -2h1v1h-1zM5 -1h3v1h-3z"/><path id="g178" d="M1 -10h10v1h-10zM5 -9h1v1h-1zM5 -8h1v1h-1zM5 -7h2v1h-2zM5 -6h1v1h-1zM7 -6h2v1h-2zM5 -5h1v1h-1zM9 -5h2v1h-2zM5 -4h1v1h-1zM5 -3h1v1h-1zM5 -2h1v1h-1zM5 -1h1v1h-1z"/><path id="g179" d="M4 -10h1v1h-1zM4 -9h1v1h-1zM7 -9h1v1h-1zM4 -8h3v1h-3zM2 -7h2v1h-2zM5 -7h1v1h-1zM6 -6h1v1h-1zM5 -5h2v1h-2zM6 -4h2v1h-2zM2 -3h1v1h-1zM2 -2h1v1h-1zM3 -1h4v1h-4z"/><path id="g180" d="M1 -9h1v1h-1zM1 -8h1v1h-1zM7 -8h1v1h-1zM1 -7h1v1h-1zM7 -7h1v1h-1zM1 -6h1v1h-1zM8 -6h1v1h-1zM1 -5h1v1h-1zM8 -5h1v1h-1zM1 -4h1v1h-1zM4 -4h1v1h-1zM8 -4h1v1h-1zM1 -3h1v1h-1zM4 -3h1v1h-1zM2 -2h1v1h-1zM4 -2h1v1h-1zM2 -1h2v1h-2z"/><path id="g181" d="M2 -11h1v1h-1zM6 -11h1v1h-1zM9 -11h1v1h-1zM2 -10h1v1h-1zM5 -10h1v1h-1zM8 -10h1v1h-1zM1 -9h3v1h-3zM5 -9h6v1h-6zM2 -8h1v1h-1zM5 -8h1v1h-1zM8 -8h1v1h-1zM2 -7h1v1h-1zM4 -7h2v1h-2zM8 -7h1v1h-1zM2 -6h1v1h-1zM5 -6h6v1h-6zM1 -5h3v1h-3zM5 -5h1v1h-1zM8 -5h1v1h-1zM2 -4h1v1h-1zM5 -4h6v1h-6zM2 -3h1v1h-1zM5 -3h1v1h-1zM8 -3h1v1h-1zM2 -2h1v1h-1zM5 -2h6v1h-6zM1 -1h2v1h-2zM5 -1h1v1h-1z"/><path id="g182" d="M3 -11h1v1h-1zM5 -11h6v1h-6zM1 -10h1v1h-1zM3 -10h3v1h-3zM7 -10h1v1h-1zM9 -10h1v1h-1zM3 -9h1v1h-1zM6 -9h1v1h-1zM9 -9h1v1h-1zM2 -8h9v1h-9zM1 -7h3v1h-3zM6 -7h1v1h-1zM9 -7h1v1h-1zM1 -6h1v1h-1zM3 -6h1v1h-1zM7 -6h3v1h-3zM6 -5h1v1h-1zM1 -4h10v1h-10zM6 -3h2v1h-2zM5 -2h1v1h-1zM7 -2h2v1h-2zM2 -1h3v1h-3zM9 -1h2v1h-2z"/><path id="g183" d="M6 -11h1v1h-1zM1 -10h10v1h-10zM6 -9h1v1h-1zM2 -8h8v1h-8zM6 -7h1v1h-1zM1 -6h10v1h-10zM5 -5h2v1h-2zM9 -5h1v1h-1zM3 -4h2v1h-2zM7 -4h1v1h-1zM9 -4h1v1h-1zM1 -3h2v1h-2zM4 -3h1v1h-1zM8 -3h1v1h-1zM4 -2h1v1h-1zM6 -2h1v1h-1zM9 -2h1v1h-1zM2 -1h4v1h-4zM10 -1h1v1h-1z"/><path id="g184" d="M2 -10h8v1h-8zM1 -7h10v1h-10zM6 -6h1v1h-1zM3 -5h1v1h-1zM6 -5h1v1h-1zM8 -5h1v1h-1zM2 -4h2v1h-2zM6 -4h1v1h-1zM9 -4h1v1h-1zM2 -3h1v1h-1zM6 -3h1v1h-1zM10 -3h1v1h-1zM1 -2h1v1h-1zM6 -2h1v1h-1zM10 -2h1v1h-1zM4 -1h3v1h-3z"/><path id="g185" d="M3 -11h1v1h-1zM3 -10h1v1h-1zM6 -10h5v1h-5zM1 -9h6v1h-6zM2 -8h1v1h-1zM4 -8h1v1h-1zM6 -8h1v1h-1zM1 -7h10v1h-10zM3 -6h1v1h-1zM6 -6h1v1h-1zM9 -6h1v1h-1zM1 -5h6v1h-6zM9 -5h1v1h-1zM3 -4h1v1h-1zM6 -4h1v1h-1zM9 -4h1v1h-1zM2 -3h5v1h-5zM9 -3h1v1h-1zM1 -2h1v1h-1zM3 -2h1v1h-1zM6 -2h1v1h-1zM9 -2h1v1h-1zM3 -1h1v1h-1zM5 -1h1v1h-1zM9 -1h1v1h-1z"/><path id="g186" d="M1 -10h5v1h-5zM7 -10h1v1h-1zM1 -9h5v1h-5zM7 -9h4v1h-4zM1 -8h1v1h-1zM5 -8h3v1h-3zM1 -7h5v1h-5zM1 -6h5v1h-5zM7 -6h4v1h-4zM1 -5h1v1h-1zM2 -4h8v1h-8zM2 -3h1v1h-1zM4 -3h1v1h-1zM7 -3h1v1h-1zM9 -3h1v1h-1zM2 -2h1v1h-1zM4 -2h1v1h-1zM7 -2h1v1h-1zM9 -2h1v1h-1zM1 -1h10v1h-10z"/><path id="g187" d="M2 -11h1v1h-1zM2 -10h1v1h-1zM6 -10h5v1h-5zM1 -9h4v1h-4zM6 -9h5v1h-5zM3 -8h1v1h-1zM6 -8h1v1h-1zM10 -8h1v1h-1zM2 -7h1v1h-1zM6 -7h5v1h-5zM2 -6h2v1h-2zM6 -6h1v1h-1zM10 -6h1v1h-1zM1 -5h2v1h-2zM4 -5h7v1h-7zM2 -4h1v1h-1zM7 -4h2v1h-2zM2 -3h1v1h-1zM6 -3h1v1h-1zM8 -3h1v1h-1zM11 -3h1v1h-1zM2 -2h1v1h-1zM6 -2h1v1h-1zM8 -2h1v1h-1zM11 -2h1v1h-1zM2 -1h1v1h-1zM5 -1h1v1h-1zM8 -1h4v1h-4z"/><path id="g188" d="M2 -10h8v1h-8zM2 -9h1v1h-1zM9 -9h1v1h-1zM2 -8h1v1h-1zM9 -8h1v1h-1zM2 -7h1v1h-1zM9 -7h1v1h-1zM2 -6h8v1h-8zM2 -5h1v1h-1zM9 -5h1v1h-1zM2 -4h1v1h-1zM9 -4h1v1h-1zM2 -3h1v1h-1zM9 -3h1v1h-1zM2 -2h8v1h-8zM2 -1h1v1h-1zM9 -1h1v1h-1z"/><path id="g189" d="M3 -11h1v1h-1zM9 -11h1v1h-1zM3 -10h1v1h-1zM9 -10h1v1h-1zM2 -9h1v1h-1zM9 -9h1v1h-1zM2 -8h1v1h-1zM4 -8h7v1h-7zM1 -7h2v1h-2zM9 -7h1v1h-1zM1 -6h2v1h-2zM5 -6h1v1h-1zM9 -6h1v1h-1zM2 -5h1v1h-1zM6 -5h1v1h-1zM9 -5h1v1h-1zM2 -4h1v1h-1zM6 -4h2v1h-2zM9 -4h1v1h-1zM2 -3h1v1h-1zM9 -3h1v1h-1zM2 -2h1v1h-1zM9 -2h1v1h-1zM2 -1h1v1h-1zM7 -1h3v1h-3z"/><path id="g190" d="M3 -11h1v1h-1zM10 -11h1v1h-1zM3 -10h1v1h-1zM8 -10h1v1h-1zM10 -10h1v1h-1zM1 -9h6v1h-6zM8 -9h1v1h-1zM10 -9h1v1h-1zM3 -8h1v1h-1zM8 -8h1v1h-1zM10 -8h1v1h-1zM1 -7h2v1h-2zM5 -7h1v1h-1zM8 -7h1v1h-1zM10 -7h1v1h-1zM2 -6h1v1h-1zM4 -6h1v1h-1zM8 -6h1v1h-1zM10 -6h1v1h-1zM3 -5h1v1h-1zM5 -5h1v1h-1zM8 -5h1v1h-1zM10 -5h1v1h-1zM1 -4h2v1h-2zM4 -4h1v1h-1zM8 -4h1v1h-1zM10 -4h1v1h-1zM3 -3h1v1h-1zM5 -3h1v1h-1zM10 -3h1v1h-1zM2 -2h1v1h-1zM6 -2h1v1h-1zM10 -2h1v1h-1zM1 -1h1v1h-1zM8 -1h3v1h-3z"/><path id="g191" d="M5 -10h1v1h-1zM5 -9h1v1h-1zM1 -8h8v1h-8zM5 -7h1v1h-1zM2 -6h1v1h-1zM5 -6h1v1h-1zM7 -6h1v1h-1zM2 -5h1v1h-1zM5 -5h1v1h-1zM7 -5h1v1h-1zM2 -4h1v1h-1zM5 -4h1v1h-1zM8 -4h1v1h-1zM1 -3h1v1h-1zM5 -3h1v1h-1zM8 -3h1v1h-1zM1 -2h1v1h-1zM5 -2h1v1h-1zM3 -1h3v1h-3z"/><path id="g192" d="M5 -11h1v1h-1zM5 -10h4v1h-4zM4 -9h1v1h-1zM8 -9h1v1h-1zM2 -8h3v1h-3zM7 -8h1v1h-1zM2 -7h1v1h-1zM5 -7h2v1h-2zM5 -6h1v1h-1zM3 -5h7v1h-7zM1 -4h2v1h-2zM4 -4h1v1h-1zM9 -4h1v1h-1zM4 -3h1v1h-1zM9 -3h1v1h-1zM4 -2h6v1h-6zM4 -1h1v1h-1zM9 -1h1v1h-1z"/><path id="g193" d="M5 -11h5v1h-5zM2 -10h3v1h-3zM6 -10h1v1h-1zM9 -10h1v1h-1zM3 -9h1v1h-1zM6 -9h1v1h-1zM8 -9h1v1h-1zM1 -8h10v1h-10zM5 -7h3v1h-3zM3 -6h2v1h-2zM6 -6h1v1h-1zM8 -6h1v1h-1zM2 -5h9v1h-9zM2 -4h8v1h-8zM2 -3h1v1h-1zM6 -3h1v1h-1zM9 -3h1v1h-1zM2 -2h8v1h-8zM2 -1h1v1h-1zM9 -1h1v1h-1z"/><path id="g194" d="M2 -10h8v1h-8zM2 -9h1v1h-1zM9 -9h1v1h-1zM2 -8h8v1h-8zM1 -6h10v1h-10zM3 -5h7v1h-7zM2 -4h1v1h-1zM9 -4h1v1h-1zM9 -3h1v1h-1zM5 -2h4v1h-4z"/><path id="g195" d="M7 -11h2v1h-2zM7 -10h1v1h-1zM9 -10h1v1h-1zM1 -9h7v1h-7zM7 -8h1v1h-1zM7 -7h1v1h-1zM6 -6h1v1h-1zM6 -5h1v1h-1zM5 -4h2v1h-2zM5 -3h1v1h-1zM3 -2h2v1h-2zM2 -1h2v1h-2z"/><path id="g196" d="M4 -10h1v1h-1zM4 -9h1v1h-1zM4 -8h4v1h-4zM1 -7h4v1h-4zM7 -7h1v1h-1zM4 -6h1v1h-1zM7 -6h1v1h-1zM4 -5h1v1h-1zM7 -5h1v1h-1zM3 -4h1v1h-1zM7 -4h1v1h-1zM3 -3h1v1h-1zM7 -3h1v1h-1zM2 -2h1v1h-1zM7 -2h1v1h-1zM1 -1h1v1h-1zM5 -1h3v1h-3z"/><path id="g197" d="M4 -8h1v1h-1zM4 -7h1v1h-1zM4 -6h1v1h-1zM3 -5h1v1h-1zM3 -4h1v1h-1zM2 -3h1v1h-1zM2 -2h1v1h-1zM2 -1h1v1h-1zM1 0h1v1h-1z"/><path id="g198" d="M2 -8h3v1h-3zM1 -7h1v1h-1zM5 -7h1v1h-1zM5 -6h1v1h-1zM3 -5h2v1h-2zM5 -4h1v1h-1zM5 -3h1v1h-1zM1 -2h1v1h-1zM5 -2h1v1h-1zM2 -1h3v1h-3z"/><path id="g199" d="M5 -8h1v1h-1zM4 -7h2v1h-2zM3 -6h1v1h-1zM5 -6h1v1h-1zM3 -5h1v1h-1zM5 -5h1v1h-1zM2 -4h1v1h-1zM5 -4h1v1h-1zM1 -3h7v1h-7zM5 -2h1v1h-1zM5 -1h1v1h-1z"/><path id="g200" d="M2 -8h3v1h-3zM1 -7h1v1h-1zM5 -7h1v1h-1zM1 -6h1v1h-1zM5 -6h1v1h-1zM2 -5h3v1h-3zM1 -4h1v1h-1zM5 -4h1v1h-1zM1 -3h1v1h-1zM5 -3h1v1h-1zM1 -2h1v1h-1zM5 -2h1v1h-1zM2 -1h3v1h-3z"/><path id="g201" d="M1 -6h1v1h-1zM5 -6h1v1h-1zM8 -6h1v1h-1zM1 -5h1v1h-1zM4 -5h2v1h-2zM8 -5h1v1h-1zM2 -4h1v1h-1zM4 -4h2v1h-2zM7 -4h1v1h-1zM2 -3h2v1h-2zM6 -3h2v1h-2zM3 -2h1v1h-1zM6 -2h2v1h-2zM3 -1h1v1h-1zM6 -1h2v1h-2z"/><path id="g202" d="M2 -6h1v1h-1zM5 -6h1v1h-1zM2 -5h1v1h-1zM4 -5h1v1h-1zM3 -4h2v1h-2zM3 -3h2v1h-2zM2 -2h1v1h-1zM4 -2h1v1h-1zM1 -1h2v1h-2zM5 -1h1v1h-1z"/><path id="g203" d="M2 -9h3v1h-3zM2 -8h1v1h-1zM2 -7h1v1h-1zM1 -6h3v1h-3zM2 -5h1v1h-1zM2 -4h1v1h-1zM2 -3h1v1h-1zM2 -2h1v1h-1zM2 -1h1v1h-1z"/><path id="g204" d="M1 -8h5v1h-5zM5 -7h1v1h-1zM4 -6h1v1h-1zM4 -5h1v1h-1zM3 -4h1v1h-1zM3 -3h1v1h-1zM3 -2h1v1h-1zM2 -1h1v1h-1z"/><path id="g205" d="M2 -8h5v1h-5zM6 -7h1v1h-1zM6 -6h1v1h-1zM6 -5h1v1h-1zM6 -4h1v1h-1zM6 -3h1v1h-1zM1 -2h8v1h-8z"/><path id="g206" d="M9 -11h1v1h-1zM2 -10h1v1h-1zM7 -10h3v1h-3zM2 -9h1v1h-1zM7 -9h2v1h-2zM2 -8h1v1h-1zM7 -8h1v1h-1zM1 -7h9v1h-9zM2 -6h1v1h-1zM7 -6h1v1h-1zM2 -5h1v1h-1zM6 -5h1v1h-1zM2 -4h1v1h-1zM6 -4h1v1h-1zM6 -3h1v1h-1zM6 -2h1v1h-1zM4 -1h2v1h-2zM4 0h1v1h-1z"/></g>
</defs>
<rect x="0" y="0" width="960" height="719" fill="#0A3FD6"/><rect x="0" y="0" width="960" height="12" fill="#E4ECF4"/><rect x="0" y="0" width="960" height="40" rx="8" fill="url(#gTitle)"/><rect x="0" y="30" width="960" height="689" fill="#0545DD"/><rect x="1" y="30" width="2" height="685" fill="#0A5AF0"/><rect x="957" y="30" width="2" height="685" fill="#0852E8"/><rect x="0" y="715" width="960" height="4" fill="#0A3FC8"/><rect x="4" y="30" width="952" height="685" fill="#ECE9D8"/><rect x="4" y="30" width="952" height="1" fill="#F4F6FA"/><circle cx="13" cy="14" r="6" fill="url(#gGlobe)"/><g fill="#0A2090"><use href="#g0" x="26" y="22"/><use href="#g0" x="27" y="22"/></g><g fill="#0A2090"><use href="#g1" x="37" y="22"/><use href="#g1" x="38" y="22"/></g><g fill="#0A2090"><use href="#g2" x="44" y="22"/><use href="#g2" x="45" y="22"/></g><g fill="#0A2090"><use href="#g3" x="52" y="22"/><use href="#g3" x="53" y="22"/></g><g fill="#0A2090"><use href="#g4" x="61" y="22"/><use href="#g4" x="62" y="22"/></g><g fill="#0A2090"><use href="#g5" x="70" y="22"/><use href="#g5" x="71" y="22"/></g><g fill="#0A2090"><use href="#g6" x="80" y="23"/><use href="#g6" x="81" y="23"/><use href="#g7" x="94" y="23"/><use href="#g7" x="95" y="23"/><use href="#g8" x="108" y="23"/><use href="#g8" x="109" y="23"/><use href="#g9" x="122" y="23"/><use href="#g9" x="123" y="23"/><use href="#g10" x="136" y="23"/><use href="#g10" x="137" y="23"/><use href="#g11" x="150" y="23"/><use href="#g11" x="151" y="23"/><use href="#g12" x="164" y="23"/><use href="#g12" x="165" y="23"/><use href="#g13" x="175" y="23"/><use href="#g13" x="176" y="23"/><use href="#g14" x="187" y="23"/><use href="#g14" x="188" y="23"/></g><g fill="#FFFFFF"><use href="#g0" x="25" y="21"/><use href="#g0" x="26" y="21"/></g><g fill="#FFFFFF"><use href="#g1" x="36" y="21"/><use href="#g1" x="37" y="21"/></g><g fill="#FFFFFF"><use href="#g2" x="43" y="21"/><use href="#g2" x="44" y="21"/></g><g fill="#FFFFFF"><use href="#g3" x="51" y="21"/><use href="#g3" x="52" y="21"/></g><g fill="#FFFFFF"><use href="#g4" x="60" y="21"/><use href="#g4" x="61" y="21"/></g><g fill="#FFFFFF"><use href="#g5" x="69" y="21"/><use href="#g5" x="70" y="21"/></g><g fill="#FFFFFF"><use href="#g6" x="79" y="22"/><use href="#g6" x="80" y="22"/><use href="#g7" x="93" y="22"/><use href="#g7" x="94" y="22"/><use href="#g8" x="107" y="22"/><use href="#g8" x="108" y="22"/><use href="#g9" x="121" y="22"/><use href="#g9" x="122" y="22"/><use href="#g10" x="135" y="22"/><use href="#g10" x="136" y="22"/><use href="#g11" x="149" y="22"/><use href="#g11" x="150" y="22"/><use href="#g12" x="163" y="22"/><use href="#g12" x="164" y="22"/><use href="#g13" x="174" y="22"/><use href="#g13" x="175" y="22"/><use href="#g14" x="186" y="22"/><use href="#g14" x="187" y="22"/></g><rect x="887.5" y="6.5" width="20" height="20" rx="3" fill="url(#gTBtn)" stroke="#FFFFFF" stroke-width="1"/><rect x="892" y="19" width="7" height="3" fill="#FFFFFF"/><rect x="910.5" y="6.5" width="20" height="20" rx="3" fill="url(#gTBtn)" stroke="#FFFFFF" stroke-width="1"/><rect x="914" y="11" width="12" height="3" fill="#FFFFFF"/><rect x="914" y="11" width="1" height="11" fill="#FFFFFF"/><rect x="925" y="11" width="1" height="11" fill="#FFFFFF"/><rect x="914" y="21" width="12" height="1" fill="#FFFFFF"/><rect x="933.5" y="6.5" width="20" height="20" rx="3" fill="url(#gClose)" stroke="#FFFFFF" stroke-width="1"/><path d="M938 11L949 22M949 11L938 22" stroke="#FFFFFF" stroke-width="2"/><g fill="#000"><use href="#g15" x="10" y="44"/><use href="#g16" x="19" y="44"/><use href="#g17" x="29" y="44"/><use href="#g18" x="39" y="44"/><use href="#g19" x="49" y="44"/><use href="#g20" x="53" y="44"/><use href="#g21" x="59" y="44"/></g><rect x="54" y="44" width="6" height="1" fill="#000"/><g fill="#000"><use href="#g22" x="78" y="44"/><use href="#g23" x="90" y="44"/><use href="#g19" x="102" y="44"/><use href="#g4" x="106" y="44"/><use href="#g21" x="114" y="44"/></g><rect x="107" y="44" width="6" height="1" fill="#000"/><g fill="#000"><use href="#g24" x="130" y="44"/><use href="#g25" x="139" y="44"/><use href="#g26" x="148" y="44"/><use href="#g27" x="158" y="44"/><use href="#g28" x="168" y="44"/><use href="#g25" x="178" y="44"/><use href="#g29" x="186" y="44"/><use href="#g19" x="194" y="44"/><use href="#g30" x="198" y="44"/><use href="#g21" x="206" y="44"/></g><rect x="199" y="44" width="6" height="1" fill="#000"/><g fill="#000"><use href="#g31" x="225" y="44"/><use href="#g32" x="233" y="44"/><use href="#g25" x="243" y="44"/><use href="#g29" x="252" y="44"/><use href="#g33" x="260" y="44"/><use href="#g34" x="272" y="44"/><use href="#g19" x="284" y="44"/><use href="#g35" x="288" y="44"/><use href="#g21" x="294" y="44"/></g><rect x="289" y="44" width="6" height="1" fill="#000"/><g fill="#000"><use href="#g36" x="314" y="44"/><use href="#g37" x="324" y="44"/><use href="#g38" x="334" y="44"/><use href="#g27" x="343" y="44"/><use href="#g19" x="353" y="44"/><use href="#g39" x="357" y="44"/><use href="#g21" x="365" y="44"/></g><rect x="358" y="44" width="6" height="1" fill="#000"/><g fill="#000"><use href="#g40" x="381" y="44"/><use href="#g41" x="393" y="44"/><use href="#g19" x="405" y="44"/><use href="#g3" x="409" y="44"/><use href="#g21" x="417" y="44"/></g><rect x="410" y="44" width="6" height="1" fill="#000"/><g fill="#000"><use href="#g42" x="434" y="44"/><use href="#g43" x="444" y="44"/><use href="#g44" x="453" y="44"/><use href="#g19" x="463" y="44"/><use href="#g45" x="467" y="44"/><use href="#g21" x="474" y="44"/></g><rect x="468" y="44" width="6" height="1" fill="#000"/><rect x="4" y="50" width="952" height="1" fill="#ACA899"/><rect x="4" y="51" width="952" height="1" fill="#FFFFFF"/><rect x="54" y="55" width="1" height="21" fill="#C5C2B2"/><rect x="55" y="55" width="1" height="21" fill="#FFFFFF"/><rect x="154" y="55" width="1" height="21" fill="#C5C2B2"/><rect x="155" y="55" width="1" height="21" fill="#FFFFFF"/><rect x="185" y="55" width="1" height="21" fill="#C5C2B2"/><rect x="186" y="55" width="1" height="21" fill="#FFFFFF"/><rect x="239" y="55" width="1" height="21" fill="#C5C2B2"/><rect x="240" y="55" width="1" height="21" fill="#FFFFFF"/><rect x="293" y="55" width="1" height="21" fill="#C5C2B2"/><rect x="294" y="55" width="1" height="21" fill="#FFFFFF"/><rect x="324" y="55" width="1" height="21" fill="#C5C2B2"/><rect x="325" y="55" width="1" height="21" fill="#FFFFFF"/><use href="#t_plug" x="8" y="56"/><use href="#t_plugx" x="31" y="56"/><use href="#t_person" x="64" y="56"/><use href="#t_hammer" x="86" y="56"/><use href="#t_docmag" x="107" y="56"/><use href="#t_docsmag" x="131" y="56"/><use href="#t_envham" x="162" y="56"/><use href="#t_arrows" x="193" y="56"/><use href="#t_gear" x="216" y="56"/><use href="#t_fprint" x="247" y="56"/><use href="#t_chart" x="270" y="56"/><use href="#t_bell" x="301" y="56"/><rect x="5" y="80" width="315" height="613" fill="#FFFFFF"/><rect x="5" y="80" width="315" height="1" fill="#8E9AA6"/><rect x="5" y="692" width="315" height="1" fill="#8E9AA6"/><rect x="5" y="80" width="1" height="613" fill="#8E9AA6"/><rect x="319" y="80" width="1" height="613" fill="#8E9AA6"/><g clip-path="url(#clipTree)"><g stroke="#A0A0A0" stroke-width="1" stroke-dasharray="1 1"><line x1="37.5" y1="98" x2="37.5" y2="107"/><line x1="37" y1="107.5" x2="48" y2="107.5"/><line x1="56.5" y1="115" x2="56.5" y2="124"/><line x1="56" y1="124.5" x2="67" y2="124.5"/><line x1="75.5" y1="132" x2="75.5" y2="141"/><line x1="75" y1="141.5" x2="86" y2="141.5"/><line x1="94.5" y1="149" x2="94.5" y2="158"/><line x1="94" y1="158.5" x2="105" y2="158.5"/><line x1="113.5" y1="166" x2="113.5" y2="175"/><line x1="113" y1="175.5" x2="124" y2="175.5"/><line x1="132.5" y1="183" x2="132.5" y2="192"/><line x1="132" y1="192.5" x2="143" y2="192.5"/><line x1="75.5" y1="132" x2="75.5" y2="209"/><line x1="75" y1="209.5" x2="86" y2="209.5"/><line x1="75.5" y1="132" x2="75.5" y2="226"/><line x1="75" y1="226.5" x2="86" y2="226.5"/><line x1="75.5" y1="132" x2="75.5" y2="243"/><line x1="75" y1="243.5" x2="86" y2="243.5"/><line x1="75.5" y1="132" x2="75.5" y2="260"/><line x1="75" y1="260.5" x2="86" y2="260.5"/><line x1="75.5" y1="132" x2="75.5" y2="277"/><line x1="75" y1="277.5" x2="86" y2="277.5"/><line x1="75.5" y1="132" x2="75.5" y2="294"/><line x1="75" y1="294.5" x2="86" y2="294.5"/><line x1="75.5" y1="132" x2="75.5" y2="311"/><line x1="75" y1="311.5" x2="86" y2="311.5"/><line x1="56.5" y1="115" x2="56.5" y2="328"/><line x1="56" y1="328.5" x2="67" y2="328.5"/><line x1="75.5" y1="336" x2="75.5" y2="345"/><line x1="75" y1="345.5" x2="86" y2="345.5"/><line x1="94.5" y1="353" x2="94.5" y2="362"/><line x1="94" y1="362.5" x2="105" y2="362.5"/><line x1="113.5" y1="370" x2="113.5" y2="379"/><line x1="113" y1="379.5" x2="124" y2="379.5"/><line x1="132.5" y1="387" x2="132.5" y2="396"/><line x1="132" y1="396.5" x2="143" y2="396.5"/><line x1="151.5" y1="404" x2="151.5" y2="413"/><line x1="151" y1="413.5" x2="162" y2="413.5"/><line x1="170.5" y1="421" x2="170.5" y2="430"/><line x1="170" y1="430.5" x2="181" y2="430.5"/><line x1="170.5" y1="421" x2="170.5" y2="447"/><line x1="170" y1="447.5" x2="181" y2="447.5"/><line x1="170.5" y1="421" x2="170.5" y2="464"/><line x1="170" y1="464.5" x2="181" y2="464.5"/><line x1="170.5" y1="421" x2="170.5" y2="481"/><line x1="170" y1="481.5" x2="181" y2="481.5"/><line x1="170.5" y1="421" x2="170.5" y2="498"/><line x1="170" y1="498.5" x2="181" y2="498.5"/><line x1="170.5" y1="421" x2="170.5" y2="515"/><line x1="170" y1="515.5" x2="181" y2="515.5"/><line x1="170.5" y1="421" x2="170.5" y2="532"/><line x1="170" y1="532.5" x2="181" y2="532.5"/><line x1="170.5" y1="421" x2="170.5" y2="549"/><line x1="170" y1="549.5" x2="181" y2="549.5"/><line x1="151.5" y1="404" x2="151.5" y2="566"/><line x1="151" y1="566.5" x2="162" y2="566.5"/><line x1="75.5" y1="336" x2="75.5" y2="583"/><line x1="75" y1="583.5" x2="86" y2="583.5"/><line x1="75.5" y1="336" x2="75.5" y2="600"/><line x1="75" y1="600.5" x2="86" y2="600.5"/><line x1="75.5" y1="336" x2="75.5" y2="617"/><line x1="75" y1="617.5" x2="86" y2="617.5"/><line x1="56.5" y1="115" x2="56.5" y2="634"/><line x1="56" y1="634.5" x2="67" y2="634.5"/><line x1="56.5" y1="115" x2="56.5" y2="651"/><line x1="56" y1="651.5" x2="67" y2="651.5"/><line x1="56.5" y1="115" x2="56.5" y2="668"/><line x1="56" y1="668.5" x2="67" y2="668.5"/></g><rect x="14.5" y="86.5" width="8" height="8" fill="url(#gExp)" stroke="#98A0A8" stroke-width="1"/><rect x="16" y="90" width="5" height="1" fill="#000"/><use href="#i_root" x="29" y="82"/><g fill="#000"><use href="#g0" x="49" y="94"/><use href="#g1" x="60" y="94"/><use href="#g2" x="66" y="94"/><use href="#g3" x="72" y="94"/><use href="#g4" x="80" y="94"/><use href="#g5" x="88" y="94"/><use href="#g46" x="96" y="94"/><use href="#g47" x="108" y="94"/><use href="#g48" x="120" y="94"/><use href="#g49" x="128" y="94"/><use href="#g31" x="137" y="94"/><use href="#g25" x="145" y="94"/><use href="#g51" x="156" y="94"/><use href="#g52" x="160" y="94"/><use href="#g53" x="163" y="94"/><use href="#g54" x="169" y="94"/><use href="#g55" x="175" y="94"/><use href="#g52" x="181" y="94"/><use href="#g56" x="184" y="94"/><use href="#g53" x="189" y="94"/><use href="#g57" x="195" y="94"/><use href="#g58" x="200" y="94"/><use href="#g59" x="205" y="94"/></g><rect x="33.5" y="103.5" width="8" height="8" fill="url(#gExp)" stroke="#98A0A8" stroke-width="1"/><rect x="35" y="107" width="5" height="1" fill="#000"/><use href="#i_domain" x="48" y="99"/><g fill="#000"><use href="#g60" x="68" y="111"/><use href="#g53" x="74" y="111"/><use href="#g61" x="80" y="111"/><use href="#g55" x="89" y="111"/><use href="#g62" x="95" y="111"/><use href="#g63" x="98" y="111"/><use href="#g64" x="103" y="111"/></g><rect x="52.5" y="120.5" width="8" height="8" fill="url(#gExp)" stroke="#98A0A8" stroke-width="1"/><rect x="54" y="124" width="5" height="1" fill="#000"/><use href="#i_tp" x="67" y="116"/><g fill="#000"><use href="#g4" x="87" y="128"/><use href="#g65" x="95" y="128"/><use href="#g15" x="101" y="128"/><use href="#g16" x="110" y="128"/><use href="#g17" x="120" y="128"/><use href="#g18" x="130" y="128"/></g><rect x="71.5" y="137.5" width="8" height="8" fill="url(#gExp)" stroke="#98A0A8" stroke-width="1"/><rect x="73" y="141" width="5" height="1" fill="#000"/><use href="#i_folder" x="86" y="133"/><g fill="#000"><use href="#g66" x="106" y="145"/><use href="#g44" x="115" y="145"/><use href="#g67" x="125" y="145"/><use href="#g68" x="132" y="145"/><use href="#g27" x="141" y="145"/><use href="#g15" x="151" y="145"/><use href="#g69" x="160" y="145"/><use href="#g25" x="167" y="145"/><use href="#g70" x="175" y="145"/><use href="#g43" x="185" y="145"/><use href="#g27" x="194" y="145"/><use href="#g44" x="204" y="145"/></g><rect x="90.5" y="154.5" width="8" height="8" fill="url(#gExp)" stroke="#98A0A8" stroke-width="1"/><rect x="92" y="158" width="5" height="1" fill="#000"/><use href="#i_apg" x="105" y="150"/><g fill="#000"><use href="#g55" x="125" y="162"/><use href="#g71" x="131" y="162"/><use href="#g72" x="137" y="162"/></g><rect x="109.5" y="171.5" width="8" height="8" fill="url(#gExp)" stroke="#98A0A8" stroke-width="1"/><rect x="111" y="175" width="5" height="1" fill="#000"/><use href="#i_folder" x="124" y="167"/><g fill="#000"><use href="#g44" x="144" y="179"/><use href="#g73" x="154" y="179"/><use href="#g74" x="163" y="179"/><use href="#g16" x="173" y="179"/><use href="#g70" x="183" y="179"/><use href="#g43" x="194" y="179"/><use href="#g27" x="202" y="179"/><use href="#g44" x="212" y="179"/></g><use href="#i_pg" x="143" y="184"/><g fill="#000"><use href="#g71" x="163" y="196"/><use href="#g72" x="169" y="196"/></g><use href="#i_iiop" x="86" y="201"/><g fill="#000"><use href="#g75" x="106" y="213"/><use href="#g75" x="109" y="213"/><use href="#g3" x="112" y="213"/><use href="#g65" x="120" y="213"/><use href="#g67" x="126" y="213"/><use href="#g16" x="132" y="213"/><use href="#g76" x="143" y="213"/></g><use href="#i_olftp" x="86" y="218"/><g fill="#000"><use href="#g3" x="106" y="230"/><use href="#g77" x="114" y="230"/><use href="#g78" x="120" y="230"/><use href="#g4" x="126" y="230"/><use href="#g65" x="134" y="230"/><use href="#g67" x="140" y="230"/><use href="#g16" x="146" y="230"/><use href="#g76" x="157" y="230"/></g><use href="#i_vd" x="86" y="235"/><g fill="#000"><use href="#g79" x="106" y="247"/><use href="#g80" x="114" y="247"/><use href="#g31" x="121" y="247"/><use href="#g25" x="129" y="247"/><use href="#g81" x="138" y="247"/><use href="#g82" x="146" y="247"/><use href="#g49" x="153" y="247"/><use href="#g27" x="161" y="247"/><use href="#g15" x="171" y="247"/><use href="#g69" x="181" y="247"/><use href="#g25" x="187" y="247"/></g><use href="#i_multi" x="86" y="252"/><g fill="#000"><use href="#g83" x="106" y="264"/><use href="#g43" x="116" y="264"/><use href="#g84" x="125" y="264"/><use href="#g85" x="135" y="264"/><use href="#g27" x="145" y="264"/><use href="#g86" x="155" y="264"/></g><use href="#i_folder" x="86" y="269"/><g fill="#000"><use href="#g87" x="106" y="281"/><use href="#g88" x="114" y="281"/><use href="#g31" x="124" y="281"/><use href="#g66" x="132" y="281"/><use href="#g25" x="141" y="281"/><use href="#g29" x="150" y="281"/><use href="#g74" x="157" y="281"/><use href="#g89" x="167" y="281"/><use href="#g15" x="174" y="281"/><use href="#g69" x="184" y="281"/><use href="#g25" x="190" y="281"/></g><use href="#i_queue" x="86" y="286"/><g fill="#000"><use href="#g90" x="106" y="298"/><use href="#g91" x="116" y="298"/><use href="#g27" x="123" y="298"/></g><use href="#i_folder" x="86" y="303"/><g fill="#000"><use href="#g92" x="106" y="315"/><use href="#g93" x="116" y="315"/><use href="#g25" x="125" y="315"/><use href="#g73" x="134" y="315"/><use href="#g27" x="143" y="315"/><use href="#g92" x="153" y="315"/><use href="#g46" x="163" y="315"/><use href="#g47" x="175" y="315"/><use href="#g85" x="187" y="315"/><use href="#g27" x="197" y="315"/><use href="#g94" x="207" y="315"/><use href="#g16" x="217" y="315"/></g><rect x="52.5" y="324.5" width="8" height="8" fill="url(#gExp)" stroke="#98A0A8" stroke-width="1"/><rect x="54" y="328" width="5" height="1" fill="#000"/><use href="#i_diamond" x="67" y="320"/><g fill="#000"><use href="#g66" x="87" y="332"/><use href="#g44" x="96" y="332"/><use href="#g67" x="106" y="332"/><use href="#g68" x="113" y="332"/><use href="#g27" x="122" y="332"/><use href="#g15" x="132" y="332"/><use href="#g69" x="141" y="332"/><use href="#g25" x="148" y="332"/></g><rect x="71.5" y="341.5" width="8" height="8" fill="url(#gExp)" stroke="#98A0A8" stroke-width="1"/><rect x="73" y="345" width="5" height="1" fill="#000"/><use href="#i_folder" x="86" y="337"/><g fill="#000"><use href="#g0" x="106" y="349"/><use href="#g1" x="117" y="349"/><use href="#g2" x="123" y="349"/><use href="#g3" x="129" y="349"/><use href="#g4" x="137" y="349"/><use href="#g5" x="145" y="349"/><use href="#g95" x="155" y="349"/><use href="#g55" x="160" y="349"/><use href="#g96" x="166" y="349"/><use href="#g55" x="172" y="349"/><use href="#g35" x="180" y="349"/><use href="#g35" x="186" y="349"/><use href="#g66" x="192" y="349"/><use href="#g44" x="201" y="349"/><use href="#g67" x="211" y="349"/><use href="#g68" x="218" y="349"/><use href="#g27" x="227" y="349"/><use href="#g15" x="237" y="349"/><use href="#g69" x="246" y="349"/><use href="#g25" x="253" y="349"/></g><rect x="90.5" y="358.5" width="8" height="8" fill="url(#gExp)" stroke="#98A0A8" stroke-width="1"/><rect x="92" y="362" width="5" height="1" fill="#000"/><use href="#i_folder" x="105" y="354"/><g fill="#000"><use href="#g20" x="125" y="366"/><use href="#g56" x="131" y="366"/><use href="#g53" x="136" y="366"/><use href="#g71" x="142" y="366"/><use href="#g97" x="148" y="366"/><use href="#g71" x="156" y="366"/><use href="#g71" x="162" y="366"/></g><rect x="109.5" y="375.5" width="8" height="8" fill="url(#gExp)" stroke="#98A0A8" stroke-width="1"/><rect x="111" y="379" width="5" height="1" fill="#000"/><use href="#i_pfolder" x="124" y="371"/><g fill="#000"><use href="#g20" x="144" y="383"/><use href="#g56" x="150" y="383"/><use href="#g53" x="155" y="383"/><use href="#g71" x="161" y="383"/><use href="#g97" x="167" y="383"/><use href="#g71" x="175" y="383"/><use href="#g71" x="181" y="383"/><use href="#g98" x="187" y="383"/><use href="#g1" x="190" y="383"/><use href="#g55" x="196" y="383"/><use href="#g99" x="202" y="383"/></g><rect x="128.5" y="392.5" width="8" height="8" fill="url(#gExp)" stroke="#98A0A8" stroke-width="1"/><rect x="130" y="396" width="5" height="1" fill="#000"/><use href="#i_folder" x="143" y="388"/><g fill="#000"><use href="#g20" x="163" y="400"/><use href="#g56" x="169" y="400"/><use href="#g53" x="174" y="400"/><use href="#g71" x="180" y="400"/><use href="#g35" x="186" y="400"/><use href="#g95" x="192" y="400"/><use href="#g100" x="197" y="400"/></g><rect x="147.5" y="409.5" width="8" height="8" fill="url(#gExp)" stroke="#98A0A8" stroke-width="1"/><rect x="149" y="413" width="5" height="1" fill="#000"/><use href="#i_folder" x="162" y="405"/><g fill="#000"><use href="#g20" x="182" y="417"/><use href="#g56" x="188" y="417"/><use href="#g53" x="193" y="417"/><use href="#g71" x="199" y="417"/></g><use href="#i_pfolder" x="181" y="422"/><rect x="200" y="422" width="89" height="17" fill="#316AC5"/><rect x="200.5" y="422.5" width="88" height="16" fill="none" stroke="#000" stroke-width="1" stroke-dasharray="1 1" opacity="0.6"/><g fill="#fff"><use href="#g55" x="201" y="434"/><use href="#g60" x="207" y="434"/><use href="#g60" x="213" y="434"/><use href="#g97" x="219" y="434"/><use href="#g54" x="227" y="434"/><use href="#g54" x="233" y="434"/><use href="#g53" x="239" y="434"/><use href="#g101" x="245" y="434"/><use href="#g63" x="250" y="434"/><use href="#g58" x="255" y="434"/><use href="#g19" x="260" y="434"/><use href="#g62" x="264" y="434"/><use href="#g63" x="267" y="434"/><use href="#g58" x="272" y="434"/><use href="#g21" x="277" y="434"/></g><use href="#i_pfolder" x="181" y="439"/><g fill="#000"><use href="#g72" x="201" y="451"/><use href="#g1" x="207" y="451"/><use href="#g58" x="213" y="451"/><use href="#g77" x="218" y="451"/><use href="#g53" x="224" y="451"/><use href="#g72" x="230" y="451"/><use href="#g62" x="236" y="451"/><use href="#g63" x="239" y="451"/><use href="#g19" x="244" y="451"/><use href="#g102" x="248" y="451"/><use href="#g55" x="253" y="451"/><use href="#g96" x="259" y="451"/><use href="#g55" x="265" y="451"/><use href="#g98" x="271" y="451"/><use href="#g52" x="274" y="451"/><use href="#g55" x="277" y="451"/><use href="#g63" x="283" y="451"/><use href="#g72" x="288" y="451"/><use href="#g98" x="294" y="451"/><use href="#g20" x="297" y="451"/></g><use href="#i_pfolder" x="181" y="456"/><g fill="#000"><use href="#g72" x="201" y="468"/><use href="#g1" x="207" y="468"/><use href="#g58" x="213" y="468"/><use href="#g65" x="218" y="468"/><use href="#g99" x="224" y="468"/><use href="#g53" x="229" y="468"/><use href="#g60" x="235" y="468"/><use href="#g101" x="241" y="468"/><use href="#g54" x="246" y="468"/><use href="#g58" x="252" y="468"/><use href="#g19" x="257" y="468"/><use href="#g62" x="261" y="468"/><use href="#g63" x="264" y="468"/><use href="#g58" x="269" y="468"/><use href="#g21" x="274" y="468"/></g><use href="#i_pfolder" x="181" y="473"/><g fill="#000"><use href="#g72" x="201" y="485"/><use href="#g1" x="207" y="485"/><use href="#g58" x="213" y="485"/><use href="#g65" x="218" y="485"/><use href="#g99" x="224" y="485"/><use href="#g53" x="229" y="485"/><use href="#g60" x="235" y="485"/><use href="#g101" x="241" y="485"/><use href="#g54" x="246" y="485"/><use href="#g58" x="252" y="485"/><use href="#g30" x="257" y="485"/><use href="#g53" x="265" y="485"/><use href="#g101" x="271" y="485"/><use href="#g63" x="276" y="485"/><use href="#g58" x="281" y="485"/><use href="#g19" x="286" y="485"/><use href="#g21" x="290" y="485"/></g><use href="#i_pfolder" x="181" y="490"/><g fill="#000"><use href="#g99" x="201" y="502"/><use href="#g1" x="206" y="502"/><use href="#g61" x="212" y="502"/><use href="#g53" x="221" y="502"/><use href="#g96" x="227" y="502"/><use href="#g1" x="233" y="502"/><use href="#g19" x="239" y="502"/><use href="#g21" x="243" y="502"/></g><use href="#i_pfolder" x="181" y="507"/><g fill="#000"><use href="#g57" x="201" y="519"/><use href="#g1" x="206" y="519"/><use href="#g58" x="212" y="519"/><use href="#g75" x="217" y="519"/><use href="#g58" x="220" y="519"/><use href="#g1" x="225" y="519"/><use href="#g61" x="231" y="519"/><use href="#g57" x="240" y="519"/><use href="#g19" x="245" y="519"/><use href="#g51" x="249" y="519"/><use href="#g75" x="253" y="519"/><use href="#g21" x="256" y="519"/></g><use href="#i_pfolder" x="181" y="524"/><g fill="#000"><use href="#g57" x="201" y="536"/><use href="#g101" x="206" y="536"/><use href="#g2" x="211" y="536"/><use href="#g97" x="217" y="536"/><use href="#g54" x="225" y="536"/><use href="#g54" x="231" y="536"/><use href="#g53" x="237" y="536"/><use href="#g101" x="243" y="536"/><use href="#g63" x="248" y="536"/><use href="#g58" x="253" y="536"/><use href="#g19" x="258" y="536"/><use href="#g62" x="262" y="536"/><use href="#g63" x="265" y="536"/><use href="#g58" x="270" y="536"/><use href="#g21" x="275" y="536"/></g><use href="#i_pfolder" x="181" y="541"/><g fill="#000"><use href="#g58" x="201" y="553"/><use href="#g1" x="206" y="553"/><use href="#g57" x="212" y="553"/><use href="#g58" x="217" y="553"/><use href="#g19" x="222" y="553"/><use href="#g21" x="226" y="553"/></g><rect x="147.5" y="562.5" width="8" height="8" fill="url(#gExp)" stroke="#98A0A8" stroke-width="1"/><rect x="149" y="566" width="5" height="1" fill="#000"/><rect x="151" y="564" width="1" height="5" fill="#000"/><use href="#i_folder" x="162" y="558"/><g fill="#000"><use href="#g20" x="182" y="570"/><use href="#g56" x="188" y="570"/><use href="#g53" x="193" y="570"/><use href="#g71" x="199" y="570"/><use href="#g45" x="205" y="570"/><use href="#g53" x="212" y="570"/><use href="#g61" x="218" y="570"/><use href="#g1" x="227" y="570"/></g><use href="#i_folder" x="86" y="575"/><g fill="#000"><use href="#g103" x="106" y="587"/><use href="#g104" x="118" y="587"/><use href="#g24" x="130" y="587"/><use href="#g25" x="139" y="587"/><use href="#g26" x="148" y="587"/><use href="#g27" x="158" y="587"/><use href="#g28" x="168" y="587"/><use href="#g25" x="178" y="587"/><use href="#g29" x="186" y="587"/></g><rect x="71.5" y="596.5" width="8" height="8" fill="url(#gExp)" stroke="#98A0A8" stroke-width="1"/><rect x="73" y="600" width="5" height="1" fill="#000"/><rect x="75" y="598" width="1" height="5" fill="#000"/><use href="#i_folder" x="86" y="592"/><g fill="#000"><use href="#g95" x="106" y="604"/><use href="#g55" x="111" y="604"/><use href="#g96" x="117" y="604"/><use href="#g55" x="123" y="604"/><use href="#g35" x="131" y="604"/><use href="#g35" x="137" y="604"/><use href="#g66" x="143" y="604"/><use href="#g44" x="152" y="604"/><use href="#g67" x="162" y="604"/><use href="#g68" x="169" y="604"/><use href="#g27" x="178" y="604"/><use href="#g15" x="188" y="604"/><use href="#g69" x="197" y="604"/><use href="#g25" x="204" y="604"/></g><rect x="71.5" y="613.5" width="8" height="8" fill="url(#gExp)" stroke="#98A0A8" stroke-width="1"/><rect x="73" y="617" width="5" height="1" fill="#000"/><rect x="75" y="615" width="1" height="5" fill="#000"/><use href="#i_folder" x="86" y="609"/><g fill="#000"><use href="#g0" x="106" y="621"/><use href="#g1" x="117" y="621"/><use href="#g2" x="123" y="621"/><use href="#g36" x="129" y="621"/><use href="#g105" x="139" y="621"/><use href="#g91" x="149" y="621"/><use href="#g27" x="156" y="621"/><use href="#g43" x="166" y="621"/></g><rect x="52.5" y="630.5" width="8" height="8" fill="url(#gExp)" stroke="#98A0A8" stroke-width="1"/><rect x="54" y="634" width="5" height="1" fill="#000"/><rect x="56" y="632" width="1" height="5" fill="#000"/><use href="#i_notepad" x="67" y="626"/><g fill="#000"><use href="#g67" x="87" y="638"/><use href="#g106" x="94" y="638"/><use href="#g27" x="102" y="638"/><use href="#g16" x="112" y="638"/></g><rect x="52.5" y="647.5" width="8" height="8" fill="url(#gExp)" stroke="#98A0A8" stroke-width="1"/><rect x="54" y="651" width="5" height="1" fill="#000"/><rect x="56" y="649" width="1" height="5" fill="#000"/><use href="#i_appsrv" x="67" y="643"/><g fill="#000"><use href="#g66" x="87" y="655"/><use href="#g44" x="96" y="655"/><use href="#g67" x="106" y="655"/><use href="#g68" x="113" y="655"/><use href="#g27" x="122" y="655"/><use href="#g15" x="132" y="655"/><use href="#g69" x="141" y="655"/><use href="#g25" x="148" y="655"/><use href="#g85" x="156" y="655"/><use href="#g27" x="166" y="655"/><use href="#g86" x="177" y="655"/></g><rect x="52.5" y="664.5" width="8" height="8" fill="url(#gExp)" stroke="#98A0A8" stroke-width="1"/><rect x="54" y="668" width="5" height="1" fill="#000"/><rect x="56" y="666" width="1" height="5" fill="#000"/><use href="#i_stats" x="67" y="660"/><g fill="#000"><use href="#g22" x="87" y="672"/><use href="#g23" x="99" y="672"/><use href="#g107" x="111" y="672"/><use href="#g108" x="123" y="672"/></g></g><rect x="301" y="81" width="18" height="594" fill="#F8F7F3"/><rect x="301" y="81" width="1" height="594" fill="#FBFBF8"/><rect x="318" y="81" width="1" height="594" fill="#D8E0EC"/><rect x="301.5" y="82.5" width="16" height="16" rx="2" fill="url(#gBtnV)" stroke="#FFFFFF" stroke-width="1"/><rect x="302.5" y="83.5" width="14" height="14" rx="1.5" fill="none" stroke="#B4C6EE" stroke-width="1"/><rect x="303" y="97" width="13" height="1" fill="#A8B8DC"/><path d="M306.0 92.3l3.5 -3.5l3.5 3.5" fill="none" stroke="#4D6185" stroke-width="2"/><rect x="302.5" y="99.5" width="15" height="527" rx="2" fill="url(#gThumbV)" stroke="#FFFFFF" stroke-width="1"/><rect x="303.5" y="100.5" width="13" height="525" rx="1.5" fill="none" stroke="#B8CCF4" stroke-width="1"/><rect x="304" y="625" width="12" height="1" fill="#A4B8E4"/><rect x="306" y="359" width="7" height="1" fill="#EEF4FE"/><rect x="307" y="360" width="7" height="1" fill="#A8C0F0"/><rect x="306" y="361" width="7" height="1" fill="#EEF4FE"/><rect x="307" y="362" width="7" height="1" fill="#A8C0F0"/><rect x="306" y="363" width="7" height="1" fill="#EEF4FE"/><rect x="307" y="364" width="7" height="1" fill="#A8C0F0"/><rect x="306" y="365" width="7" height="1" fill="#EEF4FE"/><rect x="307" y="366" width="7" height="1" fill="#A8C0F0"/><rect x="301.5" y="657.5" width="16" height="16" rx="2" fill="url(#gBtnV)" stroke="#FFFFFF" stroke-width="1"/><rect x="302.5" y="658.5" width="14" height="14" rx="1.5" fill="none" stroke="#B4C6EE" stroke-width="1"/><rect x="303" y="672" width="13" height="1" fill="#A8B8DC"/><path d="M306.0 663.7l3.5 3.5l3.5 -3.5" fill="none" stroke="#4D6185" stroke-width="2"/><rect x="6" y="674" width="295" height="18" fill="#F8F7F3"/><rect x="6" y="674" width="295" height="1" fill="#FBFBF8"/><rect x="7.5" y="675.5" width="16" height="15" rx="2" fill="url(#gBtnV)" stroke="#FFFFFF" stroke-width="1"/><rect x="8.5" y="676.5" width="14" height="13" rx="1.5" fill="none" stroke="#B4C6EE" stroke-width="1"/><rect x="9" y="689" width="13" height="1" fill="#A8B8DC"/><path d="M17.3 679.5l-3.5 3.5l3.5 3.5" fill="none" stroke="#4D6185" stroke-width="2"/><rect x="24.5" y="675.5" width="234" height="15" rx="2" fill="url(#gThumbH)" stroke="#FFFFFF" stroke-width="1"/><rect x="25.5" y="676.5" width="232" height="13" rx="1.5" fill="none" stroke="#B8CCF4" stroke-width="1"/><rect x="26" y="689" width="231" height="1" fill="#A4B8E4"/><rect x="137" y="679" width="1" height="7" fill="#EEF4FE"/><rect x="138" y="680" width="1" height="7" fill="#A8C0F0"/><rect x="139" y="679" width="1" height="7" fill="#EEF4FE"/><rect x="140" y="680" width="1" height="7" fill="#A8C0F0"/><rect x="141" y="679" width="1" height="7" fill="#EEF4FE"/><rect x="142" y="680" width="1" height="7" fill="#A8C0F0"/><rect x="143" y="679" width="1" height="7" fill="#EEF4FE"/><rect x="144" y="680" width="1" height="7" fill="#A8C0F0"/><rect x="284.5" y="675.5" width="16" height="15" rx="2" fill="url(#gBtnV)" stroke="#FFFFFF" stroke-width="1"/><rect x="285.5" y="676.5" width="14" height="13" rx="1.5" fill="none" stroke="#B4C6EE" stroke-width="1"/><rect x="286" y="689" width="13" height="1" fill="#A8B8DC"/><path d="M290.7 679.5l3.5 3.5l-3.5 3.5" fill="none" stroke="#4D6185" stroke-width="2"/><rect x="301" y="675" width="18" height="17" fill="#ECE9D8"/><rect x="323" y="80" width="631" height="1" fill="#919B9C"/><rect x="323" y="101" width="631" height="1" fill="#919B9C"/><rect x="323" y="80" width="1" height="22" fill="#919B9C"/><rect x="953" y="80" width="1" height="22" fill="#919B9C"/><rect x="324" y="81" width="629" height="20" fill="#EFEDE2"/><rect x="324" y="81" width="93" height="20" fill="#FCFCFE"/><rect x="324" y="82" width="93" height="1" fill="#C8CCD0"/><rect x="324" y="99" width="93" height="1" fill="#C8CCD0"/><rect x="417" y="81" width="1" height="20" fill="#919B9C"/><rect x="447" y="81" width="1" height="20" fill="#919B9C"/><rect x="530" y="81" width="1" height="20" fill="#919B9C"/><g fill="#000"><use href="#g109" x="327" y="95"/><use href="#g110" x="336" y="95"/><use href="#g111" x="347" y="95"/><use href="#g27" x="356" y="95"/><use href="#g15" x="367" y="95"/><use href="#g69" x="376" y="95"/><use href="#g25" x="383" y="95"/><use href="#g112" x="392" y="95"/><use href="#g113" x="404" y="95"/></g><g fill="#000"><use href="#g114" x="420" y="95"/><use href="#g115" x="433" y="95"/></g><g fill="#000"><use href="#g116" x="450" y="95"/><use href="#g117" x="462" y="95"/><use href="#g66" x="474" y="95"/><use href="#g15" x="484" y="95"/><use href="#g16" x="493" y="95"/><use href="#g38" x="503" y="95"/><use href="#g25" x="512" y="95"/><use href="#g29" x="521" y="95"/></g><rect x="323" y="107" width="632" height="1" fill="#919B9C"/><rect x="323" y="506" width="632" height="1" fill="#919B9C"/><rect x="323" y="107" width="1" height="400" fill="#919B9C"/><rect x="954" y="107" width="1" height="400" fill="#919B9C"/><rect x="324" y="108" width="630" height="398" fill="#FCFCFE"/><rect x="326" y="110" width="626" height="1" fill="#7F9DB9"/><rect x="326" y="503" width="626" height="1" fill="#7F9DB9"/><rect x="326" y="110" width="1" height="394" fill="#7F9DB9"/><rect x="951" y="110" width="1" height="394" fill="#7F9DB9"/><rect x="327" y="111" width="624" height="392" fill="#F7FCFF"/><g clip-path="url(#clipContent)"><rect x="333" y="207" width="594" height="1" fill="#41A0B8"/><rect x="333" y="291" width="594" height="1" fill="#41A0B8"/><rect x="333" y="375" width="594" height="1" fill="#41A0B8"/><rect x="333" y="451" width="594" height="1" fill="#41A0B8"/><g fill="#000"><use href="#g66" x="333" y="128"/><use href="#g44" x="342" y="128"/><use href="#g67" x="352" y="128"/><use href="#g68" x="359" y="128"/><use href="#g27" x="368" y="128"/><use href="#g15" x="378" y="128"/><use href="#g69" x="387" y="128"/><use href="#g25" x="394" y="128"/><use href="#g70" x="402" y="128"/><use href="#g43" x="412" y="128"/><use href="#g27" x="421" y="128"/><use href="#g44" x="431" y="128"/><use href="#g118" x="441" y="128"/></g><g fill="#000"><use href="#g119" x="333" y="140"/><use href="#g120" x="345" y="140"/><use href="#g121" x="357" y="140"/><use href="#g109" x="364" y="140"/><use href="#g110" x="373" y="140"/><use href="#g111" x="383" y="140"/><use href="#g27" x="393" y="140"/><use href="#g15" x="403" y="140"/><use href="#g69" x="412" y="140"/><use href="#g25" x="418" y="140"/><use href="#g122" x="427" y="140"/><use href="#g123" x="436" y="140"/></g><g fill="#000"><use href="#g119" x="333" y="152"/><use href="#g124" x="345" y="152"/><use href="#g125" x="357" y="152"/><use href="#g126" x="369" y="152"/><use href="#g127" x="379" y="152"/></g><use href="#i_bulb" x="460" y="132"/><rect x="501.5" y="133.5" width="12" height="12" fill="url(#gChk)" stroke="#1C5180" stroke-width="1"/><path d="M504 139.0l2.5 2.5l4.5 -4.5" fill="none" stroke="#21A121" stroke-width="2"/><use href="#i_book" x="460" y="171"/><g fill="#000"><use href="#g109" x="500" y="179"/><use href="#g110" x="509" y="179"/><use href="#g111" x="520" y="179"/><use href="#g27" x="529" y="179"/><use href="#g15" x="539" y="179"/><use href="#g69" x="548" y="179"/><use href="#g25" x="555" y="179"/><use href="#g123" x="564" y="179"/><use href="#g119" x="576" y="179"/><use href="#g124" x="588" y="179"/><use href="#g125" x="600" y="179"/><use href="#g128" x="612" y="179"/><use href="#g129" x="623" y="179"/><use href="#g130" x="636" y="179"/><use href="#g122" x="648" y="179"/><use href="#g131" x="657" y="179"/><use href="#g132" x="666" y="179"/><use href="#g126" x="675" y="179"/><use href="#g19" x="685" y="179"/><use href="#g133" x="689" y="179"/><use href="#g130" x="701" y="179"/><use href="#g134" x="714" y="179"/><use href="#g135" x="726" y="179"/><use href="#g123" x="729" y="179"/><use href="#g119" x="741" y="179"/><use href="#g124" x="753" y="179"/><use href="#g125" x="765" y="179"/><use href="#g126" x="777" y="179"/><use href="#g127" x="788" y="179"/><use href="#g21" x="797" y="179"/><use href="#g136" x="802" y="179"/></g><rect x="891" y="172" width="22" height="2" fill="#8C8C8C"/><rect x="891" y="172" width="2" height="22" fill="#8C8C8C"/><rect x="894.5" y="175.5" width="18" height="17" rx="3" fill="url(#gBtn)" stroke="#1E3F74" stroke-width="1"/><g fill="#000"><use href="#g137" x="899" y="188"/><use href="#g137" x="900" y="188"/></g><g fill="#000"><use href="#g109" x="333" y="225"/><use href="#g110" x="342" y="225"/><use href="#g111" x="352" y="225"/><use href="#g27" x="362" y="225"/><use href="#g15" x="372" y="225"/><use href="#g69" x="381" y="225"/><use href="#g25" x="387" y="225"/><use href="#g128" x="396" y="225"/><use href="#g138" x="407" y="225"/><use href="#g139" x="419" y="225"/></g><g fill="#000"><use href="#g140" x="333" y="237"/><use href="#g51" x="345" y="237"/><use href="#g141" x="349" y="237"/><use href="#g142" x="355" y="237"/><use href="#g64" x="358" y="237"/><use href="#g143" x="362" y="237"/><use href="#g59" x="368" y="237"/></g><rect x="501" y="222" width="415" height="17" fill="#FFFFFF"/><rect x="501" y="222" width="415" height="1" fill="#A5ACB2"/><rect x="501" y="238" width="415" height="1" fill="#A5ACB2"/><rect x="501" y="222" width="1" height="17" fill="#A5ACB2"/><rect x="915" y="222" width="1" height="17" fill="#A5ACB2"/><g fill="#000"><use href="#g144" x="504" y="235"/></g><use href="#i_book" x="460" y="255"/><g fill="#000"><use href="#g109" x="500" y="263"/><use href="#g110" x="510" y="263"/><use href="#g111" x="520" y="263"/><use href="#g27" x="530" y="263"/><use href="#g15" x="540" y="263"/><use href="#g69" x="550" y="263"/><use href="#g25" x="556" y="263"/><use href="#g128" x="565" y="263"/><use href="#g138" x="576" y="263"/><use href="#g139" x="589" y="263"/><use href="#g140" x="601" y="263"/><use href="#g122" x="614" y="263"/><use href="#g129" x="623" y="263"/><use href="#g130" x="636" y="263"/><use href="#g131" x="648" y="263"/><use href="#g132" x="657" y="263"/><use href="#g126" x="667" y="263"/><use href="#g19" x="677" y="263"/><use href="#g133" x="681" y="263"/><use href="#g130" x="694" y="263"/><use href="#g134" x="706" y="263"/><use href="#g135" x="718" y="263"/><use href="#g144" x="722" y="263"/><use href="#g21" x="728" y="263"/><use href="#g136" x="733" y="263"/></g><rect x="891" y="256" width="22" height="2" fill="#8C8C8C"/><rect x="891" y="256" width="2" height="22" fill="#8C8C8C"/><rect x="894.5" y="259.5" width="18" height="17" rx="3" fill="url(#gBtn)" stroke="#1E3F74" stroke-width="1"/><g fill="#000"><use href="#g137" x="899" y="272"/><use href="#g137" x="900" y="272"/></g><g fill="#000"><use href="#g145" x="333" y="309"/><use href="#g146" x="345" y="309"/><use href="#g120" x="357" y="309"/><use href="#g147" x="369" y="309"/><use href="#g148" x="381" y="309"/></g><g fill="#000"><use href="#g149" x="333" y="321"/><use href="#g51" x="345" y="321"/><use href="#g142" x="349" y="321"/><use href="#g64" x="352" y="321"/><use href="#g150" x="356" y="321"/><use href="#g64" x="360" y="321"/><use href="#g141" x="364" y="321"/><use href="#g142" x="370" y="321"/><use href="#g151" x="373" y="321"/><use href="#g151" x="379" y="321"/><use href="#g151" x="385" y="321"/><use href="#g151" x="391" y="321"/><use href="#g151" x="397" y="321"/><use href="#g151" x="403" y="321"/><use href="#g59" x="409" y="321"/></g><rect x="501" y="306" width="415" height="17" fill="#FFFFFF"/><rect x="501" y="306" width="415" height="1" fill="#A5ACB2"/><rect x="501" y="322" width="415" height="1" fill="#A5ACB2"/><rect x="501" y="306" width="1" height="17" fill="#A5ACB2"/><rect x="915" y="306" width="1" height="17" fill="#A5ACB2"/><g fill="#000"><use href="#g152" x="504" y="319"/><use href="#g141" x="510" y="319"/><use href="#g141" x="516" y="319"/></g><use href="#i_book" x="460" y="339"/><g fill="#000"><use href="#g145" x="500" y="347"/><use href="#g146" x="512" y="347"/><use href="#g120" x="525" y="347"/><use href="#g147" x="537" y="347"/><use href="#g148" x="549" y="347"/><use href="#g149" x="562" y="347"/><use href="#g122" x="574" y="347"/><use href="#g129" x="583" y="347"/><use href="#g130" x="596" y="347"/><use href="#g131" x="608" y="347"/><use href="#g132" x="617" y="347"/><use href="#g126" x="626" y="347"/><use href="#g19" x="636" y="347"/><use href="#g133" x="640" y="347"/><use href="#g130" x="653" y="347"/><use href="#g134" x="665" y="347"/><use href="#g135" x="677" y="347"/><use href="#g152" x="680" y="347"/><use href="#g141" x="687" y="347"/><use href="#g141" x="693" y="347"/><use href="#g21" x="699" y="347"/><use href="#g136" x="704" y="347"/></g><rect x="891" y="340" width="22" height="2" fill="#8C8C8C"/><rect x="891" y="340" width="2" height="22" fill="#8C8C8C"/><rect x="894.5" y="343.5" width="18" height="17" rx="3" fill="url(#gBtn)" stroke="#1E3F74" stroke-width="1"/><g fill="#000"><use href="#g137" x="899" y="356"/><use href="#g137" x="900" y="356"/></g><g fill="#000"><use href="#g44" x="333" y="393"/><use href="#g73" x="343" y="393"/><use href="#g74" x="352" y="393"/><use href="#g16" x="362" y="393"/><use href="#g122" x="372" y="393"/><use href="#g153" x="382" y="393"/><use href="#g112" x="394" y="393"/><use href="#g154" x="406" y="393"/><use href="#g155" x="418" y="393"/><use href="#g126" x="430" y="393"/><use href="#g127" x="440" y="393"/></g><rect x="501.5" y="385.5" width="12" height="12" fill="url(#gChk)" stroke="#1C5180" stroke-width="1"/><use href="#i_book" x="460" y="411"/><g fill="#000"><use href="#g145" x="500" y="419"/><use href="#g146" x="512" y="419"/><use href="#g120" x="524" y="419"/><use href="#g147" x="535" y="419"/><use href="#g148" x="547" y="419"/><use href="#g149" x="559" y="419"/><use href="#g156" x="571" y="419"/><use href="#g157" x="583" y="419"/><use href="#g120" x="594" y="419"/><use href="#g158" x="606" y="419"/><use href="#g44" x="616" y="419"/><use href="#g73" x="626" y="419"/><use href="#g74" x="635" y="419"/><use href="#g16" x="645" y="419"/><use href="#g122" x="655" y="419"/><use href="#g153" x="664" y="419"/><use href="#g112" x="676" y="419"/><use href="#g154" x="688" y="419"/><use href="#g155" x="699" y="419"/><use href="#g126" x="711" y="419"/><use href="#g127" x="721" y="419"/><use href="#g159" x="730" y="419"/><use href="#g160" x="741" y="419"/><use href="#g161" x="750" y="419"/><use href="#g159" x="758" y="419"/><use href="#g122" x="769" y="419"/><use href="#g129" x="778" y="419"/><use href="#g130" x="790" y="419"/><use href="#g131" x="802" y="419"/><use href="#g132" x="810" y="419"/><use href="#g126" x="819" y="419"/><use href="#g136" x="829" y="419"/><use href="#g162" x="836" y="419"/><use href="#g128" x="844" y="419"/><use href="#g129" x="855" y="419"/></g><g fill="#000"><use href="#g130" x="500" y="431"/><use href="#g163" x="512" y="431"/><use href="#g121" x="522" y="431"/><use href="#g164" x="529" y="431"/><use href="#g165" x="541" y="431"/><use href="#g166" x="553" y="431"/><use href="#g167" x="565" y="431"/><use href="#g122" x="578" y="431"/><use href="#g168" x="587" y="431"/><use href="#g169" x="599" y="431"/><use href="#g131" x="611" y="431"/><use href="#g170" x="619" y="431"/><use href="#g171" x="631" y="431"/><use href="#g158" x="644" y="431"/><use href="#g47" x="654" y="431"/><use href="#g172" x="666" y="431"/><use href="#g131" x="678" y="431"/><use href="#g173" x="686" y="431"/><use href="#g148" x="696" y="431"/><use href="#g174" x="708" y="431"/><use href="#g175" x="719" y="431"/><use href="#g176" x="731" y="431"/><use href="#g131" x="743" y="431"/><use href="#g177" x="751" y="431"/><use href="#g178" x="761" y="431"/><use href="#g179" x="773" y="431"/><use href="#g180" x="782" y="431"/><use href="#g136" x="792" y="431"/></g><rect x="891" y="414" width="22" height="2" fill="#8C8C8C"/><rect x="891" y="414" width="2" height="22" fill="#8C8C8C"/><rect x="894.5" y="417.5" width="18" height="17" rx="3" fill="url(#gBtn)" stroke="#1E3F74" stroke-width="1"/><g fill="#000"><use href="#g137" x="899" y="430"/><use href="#g137" x="900" y="430"/></g><g fill="#000"><use href="#g145" x="333" y="469"/><use href="#g146" x="345" y="469"/><use href="#g120" x="357" y="469"/><use href="#g147" x="369" y="469"/><use href="#g148" x="381" y="469"/><use href="#g149" x="393" y="469"/><use href="#g181" x="405" y="469"/><use href="#g182" x="417" y="469"/></g><g fill="#000"><use href="#g134" x="333" y="481"/><use href="#g51" x="345" y="481"/><use href="#g142" x="349" y="481"/><use href="#g64" x="352" y="481"/><use href="#g141" x="356" y="481"/><use href="#g141" x="362" y="481"/><use href="#g141" x="368" y="481"/><use href="#g141" x="374" y="481"/><use href="#g141" x="380" y="481"/><use href="#g141" x="386" y="481"/><use href="#g59" x="392" y="481"/></g><g fill="#000"><use href="#g142" x="501" y="473"/><use href="#g64" x="504" y="473"/></g><use href="#i_book" x="460" y="500"/><g fill="#000"><use href="#g145" x="500" y="507"/><use href="#g146" x="512" y="507"/><use href="#g120" x="524" y="507"/><use href="#g147" x="536" y="507"/><use href="#g148" x="548" y="507"/><use href="#g149" x="560" y="507"/><use href="#g128" x="572" y="507"/><use href="#g181" x="583" y="507"/><use href="#g182" x="595" y="507"/><use href="#g134" x="607" y="507"/><use href="#g122" x="619" y="507"/><use href="#g183" x="628" y="507"/><use href="#g184" x="640" y="507"/><use href="#g131" x="652" y="507"/><use href="#g132" x="661" y="507"/><use href="#g126" x="670" y="507"/></g><rect x="891" y="500" width="22" height="2" fill="#8C8C8C"/><rect x="891" y="500" width="2" height="22" fill="#8C8C8C"/><rect x="894.5" y="503.5" width="18" height="17" rx="3" fill="url(#gBtn)" stroke="#1E3F74" stroke-width="1"/><g fill="#000"><use href="#g137" x="899" y="516"/><use href="#g137" x="900" y="516"/></g></g><rect x="933" y="111" width="18" height="392" fill="#F8F7F3"/><rect x="933.5" y="112.5" width="15" height="16" rx="2" fill="url(#gBtnV)" stroke="#FFFFFF" stroke-width="1"/><rect x="934.5" y="113.5" width="13" height="14" rx="1.5" fill="none" stroke="#B4C6EE" stroke-width="1"/><rect x="935" y="127" width="12" height="1" fill="#A8B8DC"/><path d="M937.5 122.3l3.5 -3.5l3.5 3.5" fill="none" stroke="#4D6185" stroke-width="2"/><rect x="933.5" y="129.5" width="15" height="288" rx="2" fill="url(#gThumbV)" stroke="#FFFFFF" stroke-width="1"/><rect x="934.5" y="130.5" width="13" height="286" rx="1.5" fill="none" stroke="#B8CCF4" stroke-width="1"/><rect x="935" y="416" width="12" height="1" fill="#A4B8E4"/><rect x="937" y="269" width="7" height="1" fill="#EEF4FE"/><rect x="938" y="270" width="7" height="1" fill="#A8C0F0"/><rect x="937" y="271" width="7" height="1" fill="#EEF4FE"/><rect x="938" y="272" width="7" height="1" fill="#A8C0F0"/><rect x="937" y="273" width="7" height="1" fill="#EEF4FE"/><rect x="938" y="274" width="7" height="1" fill="#A8C0F0"/><rect x="937" y="275" width="7" height="1" fill="#EEF4FE"/><rect x="938" y="276" width="7" height="1" fill="#A8C0F0"/><rect x="933.5" y="485.5" width="15" height="16" rx="2" fill="url(#gBtnV)" stroke="#FFFFFF" stroke-width="1"/><rect x="934.5" y="486.5" width="13" height="14" rx="1.5" fill="none" stroke="#B4C6EE" stroke-width="1"/><rect x="935" y="500" width="12" height="1" fill="#A8B8DC"/><path d="M937.5 491.7l3.5 3.5l3.5 -3.5" fill="none" stroke="#4D6185" stroke-width="2"/><rect x="705.5" y="513.5" width="119" height="19" rx="3" fill="#F5F4EA" stroke="#C9C7BA" stroke-width="1"/><g fill="#ACA899"><use href="#g176" x="753" y="528"/><use href="#g185" x="765" y="528"/></g><rect x="832.5" y="512.5" width="118" height="20" rx="3" fill="url(#gBtn)" stroke="#003C74" stroke-width="1"/><g fill="#000"><use href="#g133" x="873" y="528"/><use href="#g130" x="885" y="528"/><use href="#g134" x="897" y="528"/></g><rect x="323" y="540" width="632" height="1" fill="#919B9C"/><rect x="323" y="691" width="632" height="1" fill="#919B9C"/><rect x="323" y="540" width="1" height="152" fill="#919B9C"/><rect x="954" y="540" width="1" height="152" fill="#919B9C"/><rect x="324" y="541" width="630" height="150" fill="#FCFCFE"/><rect x="390" y="541" width="563" height="16" fill="#EFEDE2"/><rect x="390" y="557" width="564" height="1" fill="#919B9C"/><rect x="390" y="541" width="1" height="17" fill="#919B9C"/><rect x="553" y="541" width="1" height="17" fill="#919B9C"/><rect x="647" y="541" width="1" height="17" fill="#919B9C"/><g fill="#000"><use href="#g31" x="327" y="553"/><use href="#g32" x="336" y="553"/><use href="#g25" x="346" y="553"/><use href="#g29" x="355" y="553"/><use href="#g33" x="363" y="553"/><use href="#g34" x="375" y="553"/></g><g fill="#000"><use href="#g85" x="393" y="553"/><use href="#g27" x="403" y="553"/><use href="#g94" x="413" y="553"/><use href="#g16" x="423" y="553"/><use href="#g128" x="433" y="553"/><use href="#g114" x="444" y="553"/><use href="#g115" x="456" y="553"/><use href="#g186" x="468" y="553"/><use href="#g187" x="480" y="553"/><use href="#g31" x="492" y="553"/><use href="#g32" x="500" y="553"/><use href="#g25" x="510" y="553"/><use href="#g29" x="519" y="553"/><use href="#g33" x="526" y="553"/><use href="#g34" x="538" y="553"/></g><g fill="#000"><use href="#g36" x="557" y="553"/><use href="#g37" x="567" y="553"/><use href="#g38" x="577" y="553"/><use href="#g31" x="586" y="553"/><use href="#g32" x="595" y="553"/><use href="#g25" x="605" y="553"/><use href="#g29" x="613" y="553"/><use href="#g33" x="621" y="553"/><use href="#g34" x="633" y="553"/></g><rect x="326" y="559" width="626" height="1" fill="#7F9DB9"/><rect x="326" y="689" width="626" height="1" fill="#7F9DB9"/><rect x="326" y="559" width="1" height="131" fill="#7F9DB9"/><rect x="951" y="559" width="1" height="131" fill="#7F9DB9"/><rect x="327" y="560" width="624" height="129" fill="#FFFFFF"/><rect x="327" y="560" width="624" height="22" fill="url(#gHdr)"/><rect x="406" y="563" width="1" height="16" fill="#C7C5B2"/><rect x="407" y="563" width="1" height="16" fill="#FFFFFF"/><rect x="466" y="563" width="1" height="16" fill="#C7C5B2"/><rect x="467" y="563" width="1" height="16" fill="#FFFFFF"/><rect x="526" y="563" width="1" height="16" fill="#C7C5B2"/><rect x="527" y="563" width="1" height="16" fill="#FFFFFF"/><rect x="587" y="563" width="1" height="16" fill="#C7C5B2"/><rect x="588" y="563" width="1" height="16" fill="#FFFFFF"/><rect x="706" y="563" width="1" height="16" fill="#C7C5B2"/><rect x="707" y="563" width="1" height="16" fill="#FFFFFF"/><rect x="806" y="563" width="1" height="16" fill="#C7C5B2"/><rect x="807" y="563" width="1" height="16" fill="#FFFFFF"/><rect x="886" y="563" width="1" height="16" fill="#C7C5B2"/><rect x="887" y="563" width="1" height="16" fill="#FFFFFF"/><rect x="947" y="563" width="1" height="16" fill="#C7C5B2"/><rect x="948" y="563" width="1" height="16" fill="#FFFFFF"/><g fill="#000"><use href="#g188" x="336" y="577"/><use href="#g189" x="348" y="577"/></g><g fill="#000"><use href="#g120" x="416" y="577"/><use href="#g190" x="428" y="577"/></g><g fill="#000"><use href="#g191" x="475" y="577"/><use href="#g16" x="485" y="577"/><use href="#g29" x="495" y="577"/><use href="#g192" x="503" y="577"/></g><g fill="#000"><use href="#g48" x="533" y="577"/><use href="#g49" x="541" y="577"/><use href="#g31" x="550" y="577"/><use href="#g98" x="558" y="577"/><use href="#g98" x="561" y="577"/><use href="#g98" x="564" y="577"/></g><g fill="#000"><use href="#g38" x="592" y="577"/><use href="#g31" x="601" y="577"/><use href="#g44" x="610" y="577"/></g><g fill="#000"><use href="#g15" x="715" y="577"/><use href="#g27" x="724" y="577"/><use href="#g68" x="734" y="577"/><use href="#g25" x="744" y="577"/><use href="#g16" x="752" y="577"/><use href="#g193" x="762" y="577"/><use href="#g194" x="774" y="577"/></g><g fill="#000"><use href="#g85" x="815" y="577"/><use href="#g195" x="825" y="577"/><use href="#g15" x="835" y="577"/><use href="#g16" x="844" y="577"/><use href="#g17" x="854" y="577"/><use href="#g98" x="865" y="577"/><use href="#g98" x="868" y="577"/><use href="#g98" x="871" y="577"/></g><g fill="#000"><use href="#g196" x="895" y="577"/><use href="#g38" x="904" y="577"/><use href="#g73" x="913" y="577"/><use href="#g98" x="923" y="577"/><use href="#g98" x="926" y="577"/><use href="#g98" x="929" y="577"/></g><rect x="327" y="595" width="624" height="1" fill="#F0EEE6"/><rect x="327" y="608" width="624" height="1" fill="#F0EEE6"/><rect x="327" y="621" width="624" height="1" fill="#F0EEE6"/><rect x="327" y="634" width="624" height="1" fill="#F0EEE6"/><rect x="327" y="647" width="624" height="1" fill="#F0EEE6"/><rect x="327" y="660" width="624" height="1" fill="#F0EEE6"/><rect x="408" y="582" width="1" height="90" fill="#F0EEE6"/><rect x="468" y="582" width="1" height="90" fill="#F0EEE6"/><rect x="528" y="582" width="1" height="90" fill="#F0EEE6"/><rect x="589" y="582" width="1" height="90" fill="#F0EEE6"/><rect x="708" y="582" width="1" height="90" fill="#F0EEE6"/><rect x="808" y="582" width="1" height="90" fill="#F0EEE6"/><rect x="888" y="582" width="1" height="90" fill="#F0EEE6"/><rect x="949" y="582" width="1" height="90" fill="#F0EEE6"/><g fill="#000"><use href="#g144" x="333" y="593"/><use href="#g141" x="339" y="593"/><use href="#g141" x="345" y="593"/><use href="#g151" x="351" y="593"/><use href="#g197" x="357" y="593"/><use href="#g141" x="363" y="593"/><use href="#g198" x="369" y="593"/><use href="#g197" x="375" y="593"/><use href="#g141" x="381" y="593"/><use href="#g143" x="387" y="593"/></g><g fill="#000"><use href="#g144" x="413" y="593"/><use href="#g141" x="419" y="593"/><use href="#g135" x="425" y="593"/><use href="#g64" x="428" y="593"/><use href="#g151" x="432" y="593"/><use href="#g135" x="438" y="593"/><use href="#g199" x="441" y="593"/><use href="#g200" x="449" y="593"/></g><g fill="#000"><use href="#g52" x="474" y="593"/><use href="#g53" x="477" y="593"/><use href="#g54" x="483" y="593"/><use href="#g55" x="489" y="593"/><use href="#g52" x="495" y="593"/><use href="#g56" x="498" y="593"/><use href="#g53" x="503" y="593"/><use href="#g57" x="509" y="593"/><use href="#g58" x="514" y="593"/></g><g fill="#000"><use href="#g60" x="532" y="593"/><use href="#g53" x="538" y="593"/><use href="#g61" x="544" y="593"/><use href="#g55" x="553" y="593"/><use href="#g62" x="559" y="593"/><use href="#g63" x="562" y="593"/><use href="#g64" x="567" y="593"/></g><g fill="#000"><use href="#g201" x="592" y="593"/><use href="#g1" x="601" y="593"/><use href="#g2" x="607" y="593"/><use href="#g53" x="613" y="593"/><use href="#g58" x="619" y="593"/><use href="#g202" x="624" y="593"/><use href="#g98" x="630" y="593"/><use href="#g1" x="633" y="593"/><use href="#g96" x="639" y="593"/><use href="#g1" x="645" y="593"/><use href="#g63" x="651" y="593"/><use href="#g58" x="656" y="593"/><use href="#g98" x="661" y="593"/><use href="#g62" x="664" y="593"/><use href="#g63" x="667" y="593"/><use href="#g203" x="672" y="593"/><use href="#g53" x="678" y="593"/></g><g fill="#000"><use href="#g64" x="713" y="593"/><use href="#g144" x="717" y="593"/></g><g fill="#000"><use href="#g141" x="813" y="593"/><use href="#g204" x="819" y="593"/></g><g fill="#000"><use href="#g198" x="893" y="593"/><use href="#g141" x="899" y="593"/></g><g fill="#000"><use href="#g144" x="333" y="606"/><use href="#g141" x="339" y="606"/><use href="#g141" x="345" y="606"/><use href="#g151" x="351" y="606"/><use href="#g197" x="357" y="606"/><use href="#g141" x="363" y="606"/><use href="#g198" x="369" y="606"/><use href="#g197" x="375" y="606"/><use href="#g141" x="381" y="606"/><use href="#g143" x="387" y="606"/></g><g fill="#000"><use href="#g144" x="413" y="606"/><use href="#g141" x="419" y="606"/><use href="#g135" x="425" y="606"/><use href="#g64" x="428" y="606"/><use href="#g204" x="432" y="606"/><use href="#g135" x="438" y="606"/><use href="#g141" x="441" y="606"/><use href="#g152" x="447" y="606"/></g><g fill="#000"><use href="#g52" x="474" y="606"/><use href="#g53" x="477" y="606"/><use href="#g54" x="483" y="606"/><use href="#g55" x="489" y="606"/><use href="#g52" x="495" y="606"/><use href="#g56" x="498" y="606"/><use href="#g53" x="503" y="606"/><use href="#g57" x="509" y="606"/><use href="#g58" x="514" y="606"/></g><g fill="#000"><use href="#g60" x="532" y="606"/><use href="#g53" x="538" y="606"/><use href="#g61" x="544" y="606"/><use href="#g55" x="553" y="606"/><use href="#g62" x="559" y="606"/><use href="#g63" x="562" y="606"/><use href="#g64" x="567" y="606"/></g><g fill="#000"><use href="#g201" x="592" y="606"/><use href="#g1" x="601" y="606"/><use href="#g2" x="607" y="606"/><use href="#g53" x="613" y="606"/><use href="#g58" x="619" y="606"/><use href="#g202" x="624" y="606"/><use href="#g98" x="630" y="606"/><use href="#g1" x="633" y="606"/><use href="#g96" x="639" y="606"/><use href="#g1" x="645" y="606"/><use href="#g63" x="651" y="606"/><use href="#g58" x="656" y="606"/><use href="#g98" x="661" y="606"/><use href="#g62" x="664" y="606"/><use href="#g63" x="667" y="606"/><use href="#g203" x="672" y="606"/><use href="#g53" x="678" y="606"/></g><g fill="#000"><use href="#g64" x="713" y="606"/><use href="#g64" x="717" y="606"/></g><g fill="#000"><use href="#g141" x="813" y="606"/><use href="#g204" x="819" y="606"/></g><g fill="#000"><use href="#g198" x="893" y="606"/><use href="#g141" x="899" y="606"/></g><rect x="327" y="671" width="624" height="18" fill="#F8F7F3"/><rect x="327" y="671" width="624" height="1" fill="#FBFBF8"/><rect x="328.5" y="672.5" width="16" height="15" rx="2" fill="url(#gBtnV)" stroke="#FFFFFF" stroke-width="1"/><rect x="329.5" y="673.5" width="14" height="13" rx="1.5" fill="none" stroke="#B4C6EE" stroke-width="1"/><rect x="330" y="686" width="13" height="1" fill="#A8B8DC"/><path d="M338.3 676.5l-3.5 3.5l3.5 3.5" fill="none" stroke="#4D6185" stroke-width="2"/><rect x="345.5" y="672.5" width="366" height="15" rx="2" fill="url(#gThumbH)" stroke="#FFFFFF" stroke-width="1"/><rect x="346.5" y="673.5" width="364" height="13" rx="1.5" fill="none" stroke="#B8CCF4" stroke-width="1"/><rect x="347" y="686" width="363" height="1" fill="#A4B8E4"/><rect x="524" y="676" width="1" height="7" fill="#EEF4FE"/><rect x="525" y="677" width="1" height="7" fill="#A8C0F0"/><rect x="526" y="676" width="1" height="7" fill="#EEF4FE"/><rect x="527" y="677" width="1" height="7" fill="#A8C0F0"/><rect x="528" y="676" width="1" height="7" fill="#EEF4FE"/><rect x="529" y="677" width="1" height="7" fill="#A8C0F0"/><rect x="530" y="676" width="1" height="7" fill="#EEF4FE"/><rect x="531" y="677" width="1" height="7" fill="#A8C0F0"/><rect x="933.5" y="672.5" width="16" height="15" rx="2" fill="url(#gBtnV)" stroke="#FFFFFF" stroke-width="1"/><rect x="934.5" y="673.5" width="14" height="13" rx="1.5" fill="none" stroke="#B4C6EE" stroke-width="1"/><rect x="935" y="686" width="13" height="1" fill="#A8B8DC"/><path d="M939.7 676.5l3.5 3.5l-3.5 3.5" fill="none" stroke="#4D6185" stroke-width="2"/><rect x="4" y="697" width="952" height="1" fill="#D8D2BD"/><rect x="4" y="697" width="632" height="1" fill="#ACA899"/><rect x="4" y="697" width="1" height="17" fill="#ACA899"/><rect x="4" y="713" width="632" height="1" fill="#FFFFFF"/><rect x="635" y="697" width="1" height="17" fill="#FFFFFF"/><rect x="640" y="697" width="155" height="1" fill="#ACA899"/><rect x="640" y="697" width="1" height="17" fill="#ACA899"/><rect x="640" y="713" width="155" height="1" fill="#FFFFFF"/><rect x="794" y="697" width="1" height="17" fill="#FFFFFF"/><rect x="799" y="697" width="157" height="1" fill="#ACA899"/><rect x="799" y="697" width="1" height="17" fill="#ACA899"/><rect x="799" y="713" width="157" height="1" fill="#FFFFFF"/><rect x="955" y="697" width="1" height="17" fill="#FFFFFF"/><g fill="#000"><use href="#g55" x="5" y="709"/><use href="#g60" x="11" y="709"/><use href="#g60" x="17" y="709"/><use href="#g97" x="23" y="709"/><use href="#g54" x="31" y="709"/><use href="#g54" x="37" y="709"/><use href="#g53" x="43" y="709"/><use href="#g101" x="49" y="709"/><use href="#g63" x="54" y="709"/><use href="#g58" x="59" y="709"/><use href="#g19" x="64" y="709"/><use href="#g62" x="68" y="709"/><use href="#g63" x="71" y="709"/><use href="#g58" x="76" y="709"/><use href="#g21" x="81" y="709"/></g><g fill="#000"><use href="#g205" x="642" y="709"/><use href="#g27" x="652" y="709"/><use href="#g206" x="662" y="709"/><use href="#g135" x="673" y="709"/><use href="#g55" x="676" y="709"/><use href="#g60" x="682" y="709"/><use href="#g61" x="688" y="709"/><use href="#g62" x="697" y="709"/><use href="#g63" x="700" y="709"/></g><g fill="#000"><use href="#g48" x="801" y="709"/><use href="#g49" x="809" y="709"/><use href="#g31" x="818" y="709"/><use href="#g25" x="826" y="709"/><use href="#g135" x="835" y="709"/><use href="#g60" x="838" y="709"/><use href="#g53" x="844" y="709"/><use href="#g61" x="850" y="709"/><use href="#g55" x="859" y="709"/><use href="#g62" x="865" y="709"/><use href="#g63" x="868" y="709"/><use href="#g64" x="873" y="709"/></g>
</svg></body></html>
